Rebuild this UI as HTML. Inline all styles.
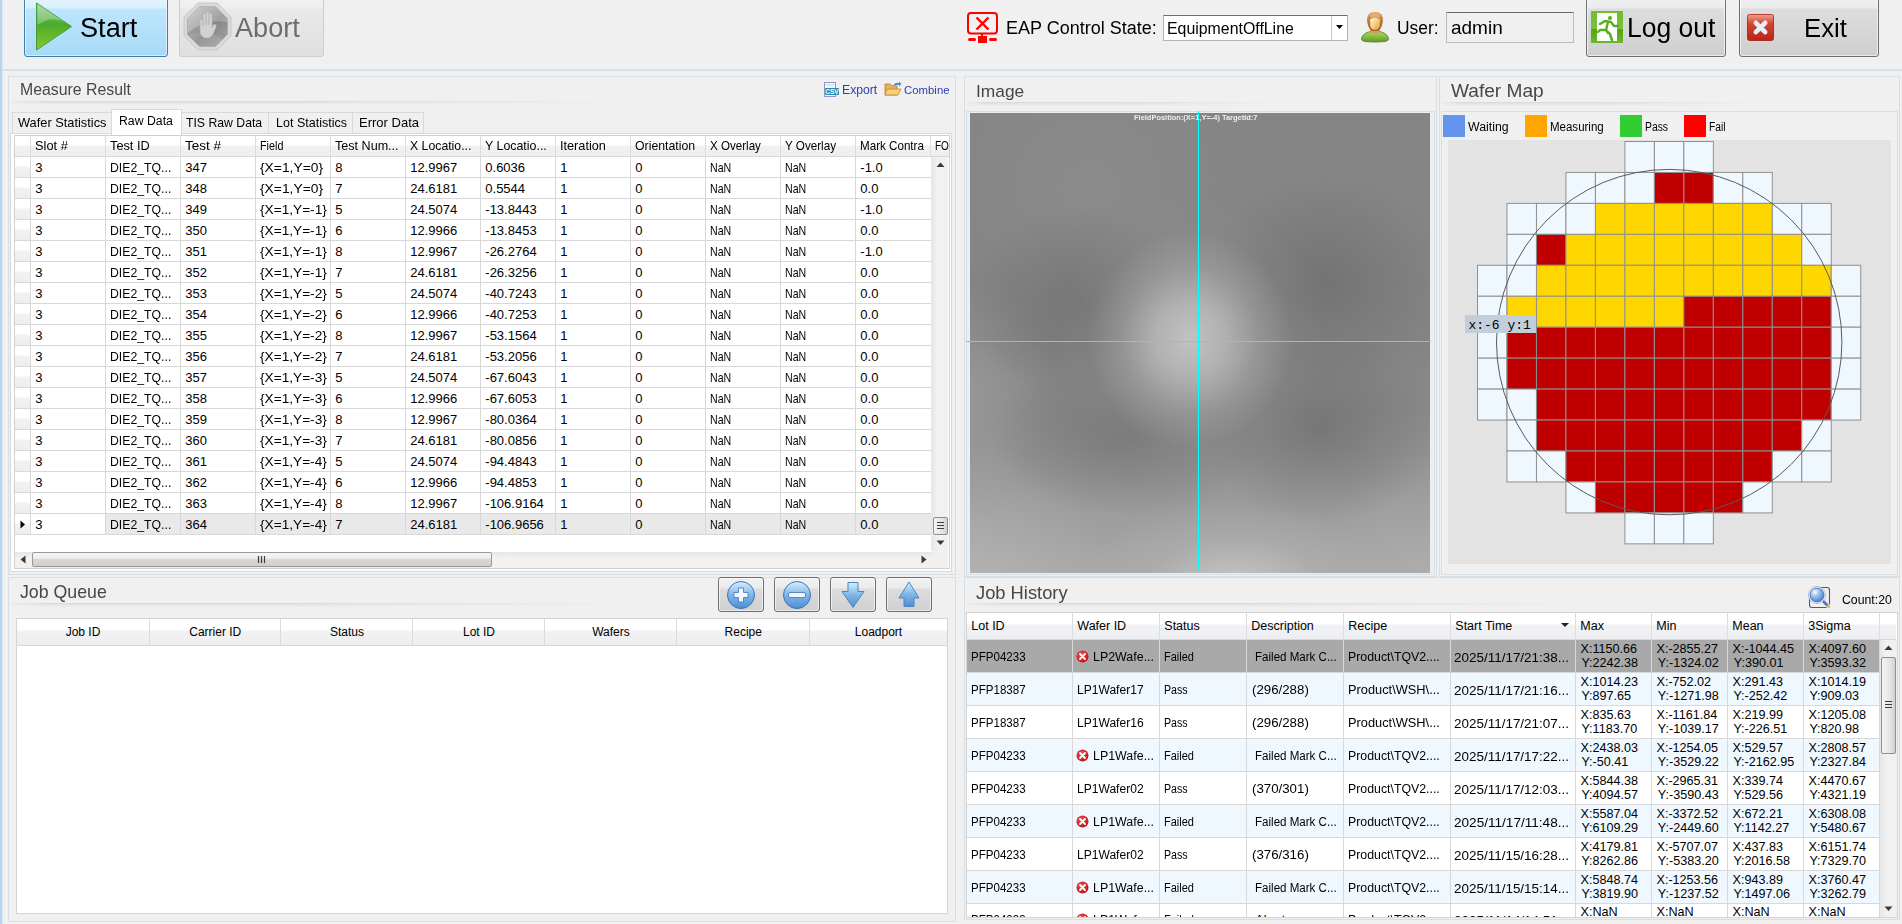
<!DOCTYPE html>
<html><head><meta charset="utf-8"><title>EAP</title>
<style>
html,body{margin:0;padding:0;}
body{width:1902px;height:924px;overflow:hidden;position:relative;background:#f0f0f0;font-family:"Liberation Sans", sans-serif;}
div,svg{box-sizing:content-box;}
</style></head><body>
<div style="position:absolute;left:0px;top:0px;width:2px;height:924px;background:#b9d3ec;"></div>
<div style="position:absolute;left:2px;top:0px;width:1px;height:924px;background:#dce8f3;"></div>
<div style="position:absolute;left:3px;top:69px;width:1899px;height:2px;background:#d6e0e7;"></div>
<div style="position:absolute;left:24px;top:-6px;width:144px;height:63px;box-sizing:border-box;border:1px solid #3c7fb1;border-radius:3px;background:linear-gradient(to bottom,#eaf6fd 0px,#d9f0fc 13px,#bee6fd 14px,#a7d9f5 62px);box-shadow:inset 0 0 0 1px rgba(255,255,255,0.55);"></div>
<svg style="position:absolute;left:34px;top:1px;" width="40" height="52" viewBox="0 0 40 52"><defs><linearGradient id="gpl" x1="0" y1="0" x2="0" y2="1"><stop offset="0" stop-color="#8fd18f"/><stop offset="0.45" stop-color="#4aab2a"/><stop offset="1" stop-color="#8cc82a"/></linearGradient></defs><polygon points="2.5,2 37.5,25.5 2.5,49" fill="url(#gpl)" stroke="#3f9e3f" stroke-width="1"/><path d="M3.5,3 L36.5,25 Q20,12 3.5,24 Z" fill="rgba(255,255,255,0.28)"/></svg>
<div style="position:absolute;top:15.14px;font-size:27px;line-height:27px;color:#000;white-space:nowrap;transform:scaleX(1.0049);transform-origin:0 0;left:80px;">Start</div>
<div style="position:absolute;left:179px;top:-6px;width:145px;height:63px;box-sizing:border-box;border:1px solid #cdcdcd;border-radius:3px;background:linear-gradient(to bottom,#f2f2f2 0px,#eeeeee 13px,#e9e9e9 14px,#dfdfdf 62px);"></div>
<svg style="position:absolute;left:183px;top:2px;" width="50" height="50" viewBox="0 0 50 50"><defs><linearGradient id="gab" x1="0" y1="0" x2="1" y2="1"><stop offset="0" stop-color="#c6c6c6"/><stop offset="0.55" stop-color="#878787"/><stop offset="1" stop-color="#a5a5a5"/></linearGradient></defs><polygon points="15,1 34,1 48,15 48,34 34,48 15,48 1,34 1,15" fill="#d9d9d9" stroke="#c8c8c8" stroke-width="1"/><polygon points="16.5,4.5 32.5,4.5 44.5,16.5 44.5,32.5 32.5,44.5 16.5,44.5 4.5,32.5 4.5,16.5" fill="url(#gab)" stroke="#a8a8a8" stroke-width="0.8"/><path d="M5,31 Q22,16 44.5,20 L44.5,16.5 32.5,4.5 16.5,4.5 4.5,16.5 Z" fill="rgba(255,255,255,0.22)"/><path d="M6,33 Q25,25 40,38 L32.5,44.5 16.5,44.5 Z" fill="rgba(255,255,255,0.12)"/><path d="M17,28 L17,19 Q17,17.5 18.5,17.5 Q20,17.5 20,19 L20,24 L20,13 Q20,11.5 21.5,11.5 Q23,11.5 23,13 L23,23 L23,11.5 Q23,10 24.5,10 Q26,10 26,11.5 L26,23 L26,13 Q26,11.5 27.5,11.5 Q29,11.5 29,13 L29,26 L30,23.5 Q31,21.5 32.5,22.5 Q33.5,23.5 33,25 L30,32 Q28,36 24,36 Q17,36 17,28 Z" fill="#d2d2d2" stroke="#b4b4b4" stroke-width="0.7"/></svg>
<div style="position:absolute;top:15.14px;font-size:27px;line-height:27px;color:#6d6d6d;white-space:nowrap;transform:scaleX(1.0041);transform-origin:0 0;left:235px;">Abort</div>
<svg style="position:absolute;left:966px;top:11px;" width="33" height="33" viewBox="0 0 33 33"><rect x="2" y="2" width="29" height="20.5" rx="3" ry="3" fill="none" stroke="#ff0000" stroke-width="2"/><path d="M10.5,6.5 L22.5,18.5 M22.5,6.5 L10.5,18.5" stroke="#ff0000" stroke-width="2.4"/><rect x="15" y="22" width="2" height="3" fill="#ff0000"/><rect x="12" y="25" width="9" height="7" fill="#ff0000"/><rect x="2" y="27" width="8" height="3" rx="1.5" fill="#ff0000"/><rect x="23" y="27" width="8" height="3" rx="1.5" fill="#ff0000"/></svg>
<div style="position:absolute;top:18.76px;font-size:18px;line-height:18px;color:#000;white-space:nowrap;transform:scaleX(0.9995);transform-origin:0 0;left:1005.5px;">EAP Control State:</div>
<div style="position:absolute;left:1163px;top:15px;width:185px;height:26px;box-sizing:border-box;background:#fff;border:1px solid #b4b4b4;border-top-color:#6e6e6e;"></div>
<div style="position:absolute;left:1331px;top:16px;width:1px;height:24px;background:#c8c8c8;"></div>
<svg style="position:absolute;left:1336px;top:25px;" width="8" height="5" viewBox="0 0 8 5"><polygon points="0,0 7,0 3.5,4" fill="#000"/></svg>
<div style="position:absolute;top:21.46px;font-size:16px;line-height:16px;color:#000;white-space:nowrap;transform:scaleX(0.9923);transform-origin:0 0;left:1166.5px;">EquipmentOffLine</div>
<svg style="position:absolute;left:1360px;top:11px;" width="30" height="32" viewBox="0 0 30 32"><defs><linearGradient id="gsh" x1="0" y1="0" x2="0" y2="1"><stop offset="0" stop-color="#b0dc60"/><stop offset="1" stop-color="#5f9a28"/></linearGradient><linearGradient id="gfc" x1="0" y1="0" x2="1" y2="1"><stop offset="0" stop-color="#fff6d8"/><stop offset="0.6" stop-color="#f4c670"/><stop offset="1" stop-color="#e0a040"/></linearGradient><linearGradient id="ghr" x1="0" y1="0" x2="0" y2="1"><stop offset="0" stop-color="#d89a58"/><stop offset="1" stop-color="#a85a20"/></linearGradient></defs><path d="M1.5,28.5 Q1.5,23.5 8,21.2 Q11,20 13,20.5 Q15,22.5 17,20.5 Q19,20 22,21.2 Q28.5,23.5 28.5,28.5 Q28.5,31 15,31 Q1.5,31 1.5,28.5 Z" fill="url(#gsh)" stroke="#4a7a20" stroke-width="0.8"/><path d="M10.5,17 H19.5 V21.5 Q15,24 10.5,21.5 Z" fill="#d49c68"/><path d="M7,10 Q6.5,1 15,1 Q23.5,1 23,10 Q22.5,15.5 19.5,19.2 Q15,21 10.5,19.2 Q7.5,15.5 7,10 Z" fill="url(#ghr)"/><ellipse cx="15" cy="4.5" rx="5.5" ry="3" fill="#e6b47a" opacity="0.8"/><path d="M10.2,8 Q15,6.2 19.8,8 L19.8,14 Q19.5,18.6 15,18.8 Q10.5,18.6 10.2,14 Z" fill="url(#gfc)"/></svg>
<div style="position:absolute;top:19.69px;font-size:17.5px;line-height:17.5px;color:#000;white-space:nowrap;transform:scaleX(0.9950);transform-origin:0 0;left:1397px;">User:</div>
<div style="position:absolute;left:1446px;top:12px;width:128px;height:31px;box-sizing:border-box;background:#f0f0f0;border:1px solid #bdbdbd;border-top-color:#6a6a6a;"></div>
<div style="position:absolute;top:17.92px;font-size:19px;line-height:19px;color:#000;white-space:nowrap;transform:scaleX(0.9991);transform-origin:0 0;left:1450.5px;">admin</div>
<div style="position:absolute;left:1586px;top:-6px;width:140px;height:63px;box-sizing:border-box;border:1px solid #707070;border-radius:3px;background:linear-gradient(to bottom,#f2f2f2 0px,#ebebeb 13px,#dddddd 14px,#cfcfcf 62px);box-shadow:inset 0 0 0 1px rgba(255,255,255,0.6);"></div>
<svg style="position:absolute;left:1591px;top:11px;" width="32" height="32" viewBox="0 0 32 32"><defs><linearGradient id="gex" x1="0" y1="0" x2="0" y2="1"><stop offset="0" stop-color="#6cc02a"/><stop offset="0.55" stop-color="#7cc040"/><stop offset="0.56" stop-color="#52a60c"/><stop offset="1" stop-color="#6cb82a"/></linearGradient></defs><rect x="0" y="0" width="32" height="32" fill="url(#gex)"/><rect x="6" y="2" width="20" height="28" fill="#fff"/><circle cx="19" cy="7" r="2" fill="#58ad1c"/><path d="M9,13 L14,10 L20,11 L23,15 L27,15 M17,11 L15,19 L9,19 L7,21 M15,19 L19,23 L21,29 M15,19 L17,22" stroke="#58ad1c" stroke-width="2.4" fill="none" stroke-linecap="round" stroke-linejoin="round"/></svg>
<div style="position:absolute;top:15.14px;font-size:27px;line-height:27px;color:#000;white-space:nowrap;transform:scaleX(0.9802);transform-origin:0 0;left:1626.5px;">Log out</div>
<div style="position:absolute;left:1739px;top:-6px;width:140px;height:63px;box-sizing:border-box;border:1px solid #707070;border-radius:3px;background:linear-gradient(to bottom,#f2f2f2 0px,#ebebeb 13px,#dddddd 14px,#cfcfcf 62px);box-shadow:inset 0 0 0 1px rgba(255,255,255,0.6);"></div>
<svg style="position:absolute;left:1747px;top:14px;" width="27" height="27" viewBox="0 0 27 27"><defs><linearGradient id="gxr" x1="0" y1="0" x2="0" y2="1"><stop offset="0" stop-color="#f0a090"/><stop offset="0.35" stop-color="#d8432e"/><stop offset="1" stop-color="#b82418"/></linearGradient></defs><rect x="0.5" y="0.5" width="26" height="26" rx="2" fill="url(#gxr)" stroke="#a81c10" stroke-width="0.8"/><path d="M8.8,8.8 L18.2,18.2 M18.2,8.8 L8.8,18.2" stroke="#e8eef8" stroke-width="4.6" stroke-linecap="round"/></svg>
<div style="position:absolute;top:14.57px;font-size:26.5px;line-height:26.5px;color:#000;white-space:nowrap;transform:scaleX(0.9711);transform-origin:0 0;left:1804.3px;">Exit</div>
<div style="position:absolute;left:8px;top:76px;width:948px;height:499px;box-sizing:border-box;border:1px solid #d5dfe7;background:#f0f0f0;"></div>
<div style="position:absolute;top:82.26px;font-size:16px;line-height:16px;color:#474747;white-space:nowrap;transform:scaleX(0.9907);transform-origin:0 0;left:19.7px;">Measure Result</div>
<div style="position:absolute;left:10px;top:101px;width:620px;height:4px;background:linear-gradient(to bottom,rgba(0,0,0,0.10) 0px,rgba(0,0,0,0.05) 1.5px,rgba(0,0,0,0) 4px);-webkit-mask-image:linear-gradient(to right,rgba(0,0,0,0.2) 0%,#000 6%,#000 45%,rgba(0,0,0,0) 100%);"></div>
<svg style="position:absolute;left:823px;top:82px;" width="17" height="16" viewBox="0 0 17 16"><rect x="1.5" y="0.5" width="11" height="14" fill="#f4f6fb" stroke="#8a9ac8" stroke-width="1"/><rect x="3" y="2" width="8" height="2" fill="#dde3f0"/><rect x="2" y="6" width="14" height="7" rx="1" fill="#2a8ab0"/><text x="9" y="12" font-size="6.5" font-family="Liberation Sans" font-weight="bold" fill="#fff" text-anchor="middle">CSV</text></svg>
<div style="position:absolute;top:84.37px;font-size:12.2px;line-height:12.2px;color:#2b3fae;white-space:nowrap;transform:scaleX(1.0011);transform-origin:0 0;left:841.5px;">Export</div>
<svg style="position:absolute;left:884px;top:81px;" width="18" height="15" viewBox="0 0 18 15"><path d="M1,3 L6,3 L8,5 L13,5 L13,14 L1,14 Z" fill="#e8b25a" stroke="#b87a2a" stroke-width="0.8"/><path d="M3,8 L17,8 L14,14 L1,14 Z" fill="#f6cf7a" stroke="#c08838" stroke-width="0.8"/><path d="M9,5 Q11,1 15,2 L15,0.5 L17.5,3 L15,5.5 L15,4 Q12,3.5 9,5 Z" fill="#4a8ad8"/></svg>
<div style="position:absolute;top:85.05px;font-size:11.4px;line-height:11.4px;color:#2b3fae;white-space:nowrap;transform:scaleX(0.9995);transform-origin:0 0;left:903.7px;">Combine</div>
<div style="position:absolute;left:10px;top:133px;width:942px;height:439px;box-sizing:border-box;border:1px solid #d9d9d9;background:#fff;"></div>
<div style="position:absolute;left:12px;top:112px;width:100px;height:22px;box-sizing:border-box;border:1px solid #d9d9d9;background:#f0f0f0;"></div>
<div style="position:absolute;top:117.33px;font-size:12.6px;line-height:12.6px;color:#000;white-space:nowrap;transform:scaleX(1.0167);transform-origin:0 0;left:18.1px;">Wafer Statistics</div>
<div style="position:absolute;left:181px;top:112px;width:88px;height:22px;box-sizing:border-box;border:1px solid #d9d9d9;background:#f0f0f0;"></div>
<div style="position:absolute;top:117.33px;font-size:12.6px;line-height:12.6px;color:#000;white-space:nowrap;transform:scaleX(0.9716);transform-origin:0 0;left:186px;">TIS Raw Data</div>
<div style="position:absolute;left:268px;top:112px;width:85px;height:22px;box-sizing:border-box;border:1px solid #d9d9d9;background:#f0f0f0;"></div>
<div style="position:absolute;top:117.33px;font-size:12.6px;line-height:12.6px;color:#000;white-space:nowrap;transform:scaleX(0.9940);transform-origin:0 0;left:275.6px;">Lot Statistics</div>
<div style="position:absolute;left:352px;top:112px;width:72px;height:22px;box-sizing:border-box;border:1px solid #d9d9d9;background:#f0f0f0;"></div>
<div style="position:absolute;top:117.33px;font-size:12.6px;line-height:12.6px;color:#000;white-space:nowrap;transform:scaleX(1.0342);transform-origin:0 0;left:359.3px;">Error Data</div>
<div style="position:absolute;left:111px;top:109px;width:71px;height:26px;box-sizing:border-box;border:1px solid #d9d9d9;border-bottom:none;background:#fff;"></div>
<div style="position:absolute;left:112px;top:133px;width:69px;height:2px;background:#fff;"></div>
<div style="position:absolute;top:114.59px;font-size:12.3px;line-height:12.3px;color:#000;white-space:nowrap;transform:scaleX(0.9981);transform-origin:0 0;left:119.4px;">Raw Data</div>
<div style="position:absolute;left:14px;top:135px;width:936px;height:434px;box-sizing:border-box;border:1px solid #d0d0d0;background:#fff;"></div>
<div style="position:absolute;left:0;top:0;width:1902px;height:924px;clip-path:inset(136px 953px 372px 15px);">
<div style="position:absolute;left:15px;top:136px;width:934px;height:20px;background:linear-gradient(to bottom,#ffffff 0px,#ffffff 9px,#f1f2f4 10px,#eceef1 20px);"></div>
<div style="position:absolute;left:15px;top:156px;width:934px;height:1px;background:#d8d8d8;"></div>
<div style="position:absolute;left:30px;top:136px;width:1px;height:20px;background:#dcdcdc;"></div>
<div style="position:absolute;left:105px;top:136px;width:1px;height:20px;background:#dcdcdc;"></div>
<div style="position:absolute;left:180px;top:136px;width:1px;height:20px;background:#dcdcdc;"></div>
<div style="position:absolute;left:255px;top:136px;width:1px;height:20px;background:#dcdcdc;"></div>
<div style="position:absolute;left:330px;top:136px;width:1px;height:20px;background:#dcdcdc;"></div>
<div style="position:absolute;left:405px;top:136px;width:1px;height:20px;background:#dcdcdc;"></div>
<div style="position:absolute;left:480px;top:136px;width:1px;height:20px;background:#dcdcdc;"></div>
<div style="position:absolute;left:555px;top:136px;width:1px;height:20px;background:#dcdcdc;"></div>
<div style="position:absolute;left:630px;top:136px;width:1px;height:20px;background:#dcdcdc;"></div>
<div style="position:absolute;left:705px;top:136px;width:1px;height:20px;background:#dcdcdc;"></div>
<div style="position:absolute;left:780px;top:136px;width:1px;height:20px;background:#dcdcdc;"></div>
<div style="position:absolute;left:855px;top:136px;width:1px;height:20px;background:#dcdcdc;"></div>
<div style="position:absolute;left:930px;top:136px;width:1px;height:20px;background:#dcdcdc;"></div>
<div style="position:absolute;top:138.60px;font-size:13px;line-height:13px;color:#000;white-space:nowrap;transform:scaleX(0.9867);transform-origin:0 0;left:35.3px;">Slot #</div>
<div style="position:absolute;top:138.60px;font-size:13px;line-height:13px;color:#000;white-space:nowrap;transform:scaleX(0.9814);transform-origin:0 0;left:110.3px;">Test ID</div>
<div style="position:absolute;top:138.60px;font-size:13px;line-height:13px;color:#000;white-space:nowrap;transform:scaleX(1.0380);transform-origin:0 0;left:185.3px;">Test #</div>
<div style="position:absolute;top:138.60px;font-size:13px;line-height:13px;color:#000;white-space:nowrap;transform:scaleX(0.8305);transform-origin:0 0;left:260.3px;">Field</div>
<div style="position:absolute;top:138.60px;font-size:13px;line-height:13px;color:#000;white-space:nowrap;transform:scaleX(0.9675);transform-origin:0 0;left:335.3px;">Test Num...</div>
<div style="position:absolute;top:138.60px;font-size:13px;line-height:13px;color:#000;white-space:nowrap;transform:scaleX(0.9441);transform-origin:0 0;left:410.3px;">X Locatio...</div>
<div style="position:absolute;top:138.60px;font-size:13px;line-height:13px;color:#000;white-space:nowrap;transform:scaleX(0.9533);transform-origin:0 0;left:485.3px;">Y Locatio...</div>
<div style="position:absolute;top:138.60px;font-size:13px;line-height:13px;color:#000;white-space:nowrap;transform:scaleX(0.9772);transform-origin:0 0;left:560.3px;">Iteration</div>
<div style="position:absolute;top:138.60px;font-size:13px;line-height:13px;color:#000;white-space:nowrap;transform:scaleX(0.9451);transform-origin:0 0;left:635.3px;">Orientation</div>
<div style="position:absolute;top:138.60px;font-size:13px;line-height:13px;color:#000;white-space:nowrap;transform:scaleX(0.8919);transform-origin:0 0;left:710.3px;">X Overlay</div>
<div style="position:absolute;top:138.60px;font-size:13px;line-height:13px;color:#000;white-space:nowrap;transform:scaleX(0.8971);transform-origin:0 0;left:785.3px;">Y Overlay</div>
<div style="position:absolute;top:138.60px;font-size:13px;line-height:13px;color:#000;white-space:nowrap;transform:scaleX(0.8935);transform-origin:0 0;left:860.3px;">Mark Contra</div>
<div style="position:absolute;top:138.60px;font-size:13px;line-height:13px;color:#000;white-space:nowrap;transform:scaleX(0.7700);transform-origin:0 0;left:935.3px;">FO</div>
<div style="position:absolute;left:15px;top:157px;width:15px;height:20px;background:linear-gradient(to bottom,#ffffff 0px,#ffffff 9px,#f1f2f4 10px,#eceef1 20px);"></div>
<div style="position:absolute;left:15px;top:177px;width:918px;height:1px;background:#d8d8d8;"></div>
<div style="position:absolute;left:30px;top:157px;width:1px;height:20px;background:#d8d8d8;"></div>
<div style="position:absolute;left:105px;top:157px;width:1px;height:20px;background:#d8d8d8;"></div>
<div style="position:absolute;left:180px;top:157px;width:1px;height:20px;background:#d8d8d8;"></div>
<div style="position:absolute;left:255px;top:157px;width:1px;height:20px;background:#d8d8d8;"></div>
<div style="position:absolute;left:330px;top:157px;width:1px;height:20px;background:#d8d8d8;"></div>
<div style="position:absolute;left:405px;top:157px;width:1px;height:20px;background:#d8d8d8;"></div>
<div style="position:absolute;left:480px;top:157px;width:1px;height:20px;background:#d8d8d8;"></div>
<div style="position:absolute;left:555px;top:157px;width:1px;height:20px;background:#d8d8d8;"></div>
<div style="position:absolute;left:630px;top:157px;width:1px;height:20px;background:#d8d8d8;"></div>
<div style="position:absolute;left:705px;top:157px;width:1px;height:20px;background:#d8d8d8;"></div>
<div style="position:absolute;left:780px;top:157px;width:1px;height:20px;background:#d8d8d8;"></div>
<div style="position:absolute;left:855px;top:157px;width:1px;height:20px;background:#d8d8d8;"></div>
<div style="position:absolute;top:161.00px;font-size:13px;line-height:13px;color:#000;white-space:nowrap;left:35.3px;">3</div>
<div style="position:absolute;top:161.00px;font-size:13px;line-height:13px;color:#000;white-space:nowrap;transform:scaleX(0.9428);transform-origin:0 0;left:110.3px;">DIE2_TQ...</div>
<div style="position:absolute;top:161.00px;font-size:13px;line-height:13px;color:#000;white-space:nowrap;left:185.3px;">347</div>
<div style="position:absolute;top:161.00px;font-size:13px;line-height:13px;color:#000;white-space:nowrap;transform:scaleX(1.0627);transform-origin:0 0;left:260.3px;">{X=1,Y=0}</div>
<div style="position:absolute;top:161.00px;font-size:13px;line-height:13px;color:#000;white-space:nowrap;left:335.3px;">8</div>
<div style="position:absolute;top:161.00px;font-size:13px;line-height:13px;color:#000;white-space:nowrap;left:410.3px;">12.9967</div>
<div style="position:absolute;top:161.00px;font-size:13px;line-height:13px;color:#000;white-space:nowrap;left:485.3px;">0.6036</div>
<div style="position:absolute;top:161.00px;font-size:13px;line-height:13px;color:#000;white-space:nowrap;left:560.3px;">1</div>
<div style="position:absolute;top:161.00px;font-size:13px;line-height:13px;color:#000;white-space:nowrap;left:635.3px;">0</div>
<div style="position:absolute;top:161.00px;font-size:13px;line-height:13px;color:#000;white-space:nowrap;transform:scaleX(0.8152);transform-origin:0 0;left:710.3px;">NaN</div>
<div style="position:absolute;top:161.00px;font-size:13px;line-height:13px;color:#000;white-space:nowrap;transform:scaleX(0.8152);transform-origin:0 0;left:785.3px;">NaN</div>
<div style="position:absolute;top:161.00px;font-size:13px;line-height:13px;color:#000;white-space:nowrap;left:860.3px;">-1.0</div>
<div style="position:absolute;left:15px;top:178px;width:15px;height:20px;background:linear-gradient(to bottom,#ffffff 0px,#ffffff 9px,#f1f2f4 10px,#eceef1 20px);"></div>
<div style="position:absolute;left:15px;top:198px;width:918px;height:1px;background:#d8d8d8;"></div>
<div style="position:absolute;left:30px;top:178px;width:1px;height:20px;background:#d8d8d8;"></div>
<div style="position:absolute;left:105px;top:178px;width:1px;height:20px;background:#d8d8d8;"></div>
<div style="position:absolute;left:180px;top:178px;width:1px;height:20px;background:#d8d8d8;"></div>
<div style="position:absolute;left:255px;top:178px;width:1px;height:20px;background:#d8d8d8;"></div>
<div style="position:absolute;left:330px;top:178px;width:1px;height:20px;background:#d8d8d8;"></div>
<div style="position:absolute;left:405px;top:178px;width:1px;height:20px;background:#d8d8d8;"></div>
<div style="position:absolute;left:480px;top:178px;width:1px;height:20px;background:#d8d8d8;"></div>
<div style="position:absolute;left:555px;top:178px;width:1px;height:20px;background:#d8d8d8;"></div>
<div style="position:absolute;left:630px;top:178px;width:1px;height:20px;background:#d8d8d8;"></div>
<div style="position:absolute;left:705px;top:178px;width:1px;height:20px;background:#d8d8d8;"></div>
<div style="position:absolute;left:780px;top:178px;width:1px;height:20px;background:#d8d8d8;"></div>
<div style="position:absolute;left:855px;top:178px;width:1px;height:20px;background:#d8d8d8;"></div>
<div style="position:absolute;top:182.00px;font-size:13px;line-height:13px;color:#000;white-space:nowrap;left:35.3px;">3</div>
<div style="position:absolute;top:182.00px;font-size:13px;line-height:13px;color:#000;white-space:nowrap;transform:scaleX(0.9428);transform-origin:0 0;left:110.3px;">DIE2_TQ...</div>
<div style="position:absolute;top:182.00px;font-size:13px;line-height:13px;color:#000;white-space:nowrap;left:185.3px;">348</div>
<div style="position:absolute;top:182.00px;font-size:13px;line-height:13px;color:#000;white-space:nowrap;transform:scaleX(1.0627);transform-origin:0 0;left:260.3px;">{X=1,Y=0}</div>
<div style="position:absolute;top:182.00px;font-size:13px;line-height:13px;color:#000;white-space:nowrap;left:335.3px;">7</div>
<div style="position:absolute;top:182.00px;font-size:13px;line-height:13px;color:#000;white-space:nowrap;left:410.3px;">24.6181</div>
<div style="position:absolute;top:182.00px;font-size:13px;line-height:13px;color:#000;white-space:nowrap;left:485.3px;">0.5544</div>
<div style="position:absolute;top:182.00px;font-size:13px;line-height:13px;color:#000;white-space:nowrap;left:560.3px;">1</div>
<div style="position:absolute;top:182.00px;font-size:13px;line-height:13px;color:#000;white-space:nowrap;left:635.3px;">0</div>
<div style="position:absolute;top:182.00px;font-size:13px;line-height:13px;color:#000;white-space:nowrap;transform:scaleX(0.8152);transform-origin:0 0;left:710.3px;">NaN</div>
<div style="position:absolute;top:182.00px;font-size:13px;line-height:13px;color:#000;white-space:nowrap;transform:scaleX(0.8152);transform-origin:0 0;left:785.3px;">NaN</div>
<div style="position:absolute;top:182.00px;font-size:13px;line-height:13px;color:#000;white-space:nowrap;left:860.3px;">0.0</div>
<div style="position:absolute;left:15px;top:199px;width:15px;height:20px;background:linear-gradient(to bottom,#ffffff 0px,#ffffff 9px,#f1f2f4 10px,#eceef1 20px);"></div>
<div style="position:absolute;left:15px;top:219px;width:918px;height:1px;background:#d8d8d8;"></div>
<div style="position:absolute;left:30px;top:199px;width:1px;height:20px;background:#d8d8d8;"></div>
<div style="position:absolute;left:105px;top:199px;width:1px;height:20px;background:#d8d8d8;"></div>
<div style="position:absolute;left:180px;top:199px;width:1px;height:20px;background:#d8d8d8;"></div>
<div style="position:absolute;left:255px;top:199px;width:1px;height:20px;background:#d8d8d8;"></div>
<div style="position:absolute;left:330px;top:199px;width:1px;height:20px;background:#d8d8d8;"></div>
<div style="position:absolute;left:405px;top:199px;width:1px;height:20px;background:#d8d8d8;"></div>
<div style="position:absolute;left:480px;top:199px;width:1px;height:20px;background:#d8d8d8;"></div>
<div style="position:absolute;left:555px;top:199px;width:1px;height:20px;background:#d8d8d8;"></div>
<div style="position:absolute;left:630px;top:199px;width:1px;height:20px;background:#d8d8d8;"></div>
<div style="position:absolute;left:705px;top:199px;width:1px;height:20px;background:#d8d8d8;"></div>
<div style="position:absolute;left:780px;top:199px;width:1px;height:20px;background:#d8d8d8;"></div>
<div style="position:absolute;left:855px;top:199px;width:1px;height:20px;background:#d8d8d8;"></div>
<div style="position:absolute;top:203.00px;font-size:13px;line-height:13px;color:#000;white-space:nowrap;left:35.3px;">3</div>
<div style="position:absolute;top:203.00px;font-size:13px;line-height:13px;color:#000;white-space:nowrap;transform:scaleX(0.9428);transform-origin:0 0;left:110.3px;">DIE2_TQ...</div>
<div style="position:absolute;top:203.00px;font-size:13px;line-height:13px;color:#000;white-space:nowrap;left:185.3px;">349</div>
<div style="position:absolute;top:203.00px;font-size:13px;line-height:13px;color:#000;white-space:nowrap;transform:scaleX(1.0502);transform-origin:0 0;left:260.3px;">{X=1,Y=-1}</div>
<div style="position:absolute;top:203.00px;font-size:13px;line-height:13px;color:#000;white-space:nowrap;left:335.3px;">5</div>
<div style="position:absolute;top:203.00px;font-size:13px;line-height:13px;color:#000;white-space:nowrap;left:410.3px;">24.5074</div>
<div style="position:absolute;top:203.00px;font-size:13px;line-height:13px;color:#000;white-space:nowrap;left:485.3px;">-13.8443</div>
<div style="position:absolute;top:203.00px;font-size:13px;line-height:13px;color:#000;white-space:nowrap;left:560.3px;">1</div>
<div style="position:absolute;top:203.00px;font-size:13px;line-height:13px;color:#000;white-space:nowrap;left:635.3px;">0</div>
<div style="position:absolute;top:203.00px;font-size:13px;line-height:13px;color:#000;white-space:nowrap;transform:scaleX(0.8152);transform-origin:0 0;left:710.3px;">NaN</div>
<div style="position:absolute;top:203.00px;font-size:13px;line-height:13px;color:#000;white-space:nowrap;transform:scaleX(0.8152);transform-origin:0 0;left:785.3px;">NaN</div>
<div style="position:absolute;top:203.00px;font-size:13px;line-height:13px;color:#000;white-space:nowrap;left:860.3px;">-1.0</div>
<div style="position:absolute;left:15px;top:220px;width:15px;height:20px;background:linear-gradient(to bottom,#ffffff 0px,#ffffff 9px,#f1f2f4 10px,#eceef1 20px);"></div>
<div style="position:absolute;left:15px;top:240px;width:918px;height:1px;background:#d8d8d8;"></div>
<div style="position:absolute;left:30px;top:220px;width:1px;height:20px;background:#d8d8d8;"></div>
<div style="position:absolute;left:105px;top:220px;width:1px;height:20px;background:#d8d8d8;"></div>
<div style="position:absolute;left:180px;top:220px;width:1px;height:20px;background:#d8d8d8;"></div>
<div style="position:absolute;left:255px;top:220px;width:1px;height:20px;background:#d8d8d8;"></div>
<div style="position:absolute;left:330px;top:220px;width:1px;height:20px;background:#d8d8d8;"></div>
<div style="position:absolute;left:405px;top:220px;width:1px;height:20px;background:#d8d8d8;"></div>
<div style="position:absolute;left:480px;top:220px;width:1px;height:20px;background:#d8d8d8;"></div>
<div style="position:absolute;left:555px;top:220px;width:1px;height:20px;background:#d8d8d8;"></div>
<div style="position:absolute;left:630px;top:220px;width:1px;height:20px;background:#d8d8d8;"></div>
<div style="position:absolute;left:705px;top:220px;width:1px;height:20px;background:#d8d8d8;"></div>
<div style="position:absolute;left:780px;top:220px;width:1px;height:20px;background:#d8d8d8;"></div>
<div style="position:absolute;left:855px;top:220px;width:1px;height:20px;background:#d8d8d8;"></div>
<div style="position:absolute;top:224.00px;font-size:13px;line-height:13px;color:#000;white-space:nowrap;left:35.3px;">3</div>
<div style="position:absolute;top:224.00px;font-size:13px;line-height:13px;color:#000;white-space:nowrap;transform:scaleX(0.9428);transform-origin:0 0;left:110.3px;">DIE2_TQ...</div>
<div style="position:absolute;top:224.00px;font-size:13px;line-height:13px;color:#000;white-space:nowrap;left:185.3px;">350</div>
<div style="position:absolute;top:224.00px;font-size:13px;line-height:13px;color:#000;white-space:nowrap;transform:scaleX(1.0502);transform-origin:0 0;left:260.3px;">{X=1,Y=-1}</div>
<div style="position:absolute;top:224.00px;font-size:13px;line-height:13px;color:#000;white-space:nowrap;left:335.3px;">6</div>
<div style="position:absolute;top:224.00px;font-size:13px;line-height:13px;color:#000;white-space:nowrap;left:410.3px;">12.9966</div>
<div style="position:absolute;top:224.00px;font-size:13px;line-height:13px;color:#000;white-space:nowrap;left:485.3px;">-13.8453</div>
<div style="position:absolute;top:224.00px;font-size:13px;line-height:13px;color:#000;white-space:nowrap;left:560.3px;">1</div>
<div style="position:absolute;top:224.00px;font-size:13px;line-height:13px;color:#000;white-space:nowrap;left:635.3px;">0</div>
<div style="position:absolute;top:224.00px;font-size:13px;line-height:13px;color:#000;white-space:nowrap;transform:scaleX(0.8152);transform-origin:0 0;left:710.3px;">NaN</div>
<div style="position:absolute;top:224.00px;font-size:13px;line-height:13px;color:#000;white-space:nowrap;transform:scaleX(0.8152);transform-origin:0 0;left:785.3px;">NaN</div>
<div style="position:absolute;top:224.00px;font-size:13px;line-height:13px;color:#000;white-space:nowrap;left:860.3px;">0.0</div>
<div style="position:absolute;left:15px;top:241px;width:15px;height:20px;background:linear-gradient(to bottom,#ffffff 0px,#ffffff 9px,#f1f2f4 10px,#eceef1 20px);"></div>
<div style="position:absolute;left:15px;top:261px;width:918px;height:1px;background:#d8d8d8;"></div>
<div style="position:absolute;left:30px;top:241px;width:1px;height:20px;background:#d8d8d8;"></div>
<div style="position:absolute;left:105px;top:241px;width:1px;height:20px;background:#d8d8d8;"></div>
<div style="position:absolute;left:180px;top:241px;width:1px;height:20px;background:#d8d8d8;"></div>
<div style="position:absolute;left:255px;top:241px;width:1px;height:20px;background:#d8d8d8;"></div>
<div style="position:absolute;left:330px;top:241px;width:1px;height:20px;background:#d8d8d8;"></div>
<div style="position:absolute;left:405px;top:241px;width:1px;height:20px;background:#d8d8d8;"></div>
<div style="position:absolute;left:480px;top:241px;width:1px;height:20px;background:#d8d8d8;"></div>
<div style="position:absolute;left:555px;top:241px;width:1px;height:20px;background:#d8d8d8;"></div>
<div style="position:absolute;left:630px;top:241px;width:1px;height:20px;background:#d8d8d8;"></div>
<div style="position:absolute;left:705px;top:241px;width:1px;height:20px;background:#d8d8d8;"></div>
<div style="position:absolute;left:780px;top:241px;width:1px;height:20px;background:#d8d8d8;"></div>
<div style="position:absolute;left:855px;top:241px;width:1px;height:20px;background:#d8d8d8;"></div>
<div style="position:absolute;top:245.00px;font-size:13px;line-height:13px;color:#000;white-space:nowrap;left:35.3px;">3</div>
<div style="position:absolute;top:245.00px;font-size:13px;line-height:13px;color:#000;white-space:nowrap;transform:scaleX(0.9428);transform-origin:0 0;left:110.3px;">DIE2_TQ...</div>
<div style="position:absolute;top:245.00px;font-size:13px;line-height:13px;color:#000;white-space:nowrap;left:185.3px;">351</div>
<div style="position:absolute;top:245.00px;font-size:13px;line-height:13px;color:#000;white-space:nowrap;transform:scaleX(1.0502);transform-origin:0 0;left:260.3px;">{X=1,Y=-1}</div>
<div style="position:absolute;top:245.00px;font-size:13px;line-height:13px;color:#000;white-space:nowrap;left:335.3px;">8</div>
<div style="position:absolute;top:245.00px;font-size:13px;line-height:13px;color:#000;white-space:nowrap;left:410.3px;">12.9967</div>
<div style="position:absolute;top:245.00px;font-size:13px;line-height:13px;color:#000;white-space:nowrap;left:485.3px;">-26.2764</div>
<div style="position:absolute;top:245.00px;font-size:13px;line-height:13px;color:#000;white-space:nowrap;left:560.3px;">1</div>
<div style="position:absolute;top:245.00px;font-size:13px;line-height:13px;color:#000;white-space:nowrap;left:635.3px;">0</div>
<div style="position:absolute;top:245.00px;font-size:13px;line-height:13px;color:#000;white-space:nowrap;transform:scaleX(0.8152);transform-origin:0 0;left:710.3px;">NaN</div>
<div style="position:absolute;top:245.00px;font-size:13px;line-height:13px;color:#000;white-space:nowrap;transform:scaleX(0.8152);transform-origin:0 0;left:785.3px;">NaN</div>
<div style="position:absolute;top:245.00px;font-size:13px;line-height:13px;color:#000;white-space:nowrap;left:860.3px;">-1.0</div>
<div style="position:absolute;left:15px;top:262px;width:15px;height:20px;background:linear-gradient(to bottom,#ffffff 0px,#ffffff 9px,#f1f2f4 10px,#eceef1 20px);"></div>
<div style="position:absolute;left:15px;top:282px;width:918px;height:1px;background:#d8d8d8;"></div>
<div style="position:absolute;left:30px;top:262px;width:1px;height:20px;background:#d8d8d8;"></div>
<div style="position:absolute;left:105px;top:262px;width:1px;height:20px;background:#d8d8d8;"></div>
<div style="position:absolute;left:180px;top:262px;width:1px;height:20px;background:#d8d8d8;"></div>
<div style="position:absolute;left:255px;top:262px;width:1px;height:20px;background:#d8d8d8;"></div>
<div style="position:absolute;left:330px;top:262px;width:1px;height:20px;background:#d8d8d8;"></div>
<div style="position:absolute;left:405px;top:262px;width:1px;height:20px;background:#d8d8d8;"></div>
<div style="position:absolute;left:480px;top:262px;width:1px;height:20px;background:#d8d8d8;"></div>
<div style="position:absolute;left:555px;top:262px;width:1px;height:20px;background:#d8d8d8;"></div>
<div style="position:absolute;left:630px;top:262px;width:1px;height:20px;background:#d8d8d8;"></div>
<div style="position:absolute;left:705px;top:262px;width:1px;height:20px;background:#d8d8d8;"></div>
<div style="position:absolute;left:780px;top:262px;width:1px;height:20px;background:#d8d8d8;"></div>
<div style="position:absolute;left:855px;top:262px;width:1px;height:20px;background:#d8d8d8;"></div>
<div style="position:absolute;top:266.00px;font-size:13px;line-height:13px;color:#000;white-space:nowrap;left:35.3px;">3</div>
<div style="position:absolute;top:266.00px;font-size:13px;line-height:13px;color:#000;white-space:nowrap;transform:scaleX(0.9428);transform-origin:0 0;left:110.3px;">DIE2_TQ...</div>
<div style="position:absolute;top:266.00px;font-size:13px;line-height:13px;color:#000;white-space:nowrap;left:185.3px;">352</div>
<div style="position:absolute;top:266.00px;font-size:13px;line-height:13px;color:#000;white-space:nowrap;transform:scaleX(1.0502);transform-origin:0 0;left:260.3px;">{X=1,Y=-1}</div>
<div style="position:absolute;top:266.00px;font-size:13px;line-height:13px;color:#000;white-space:nowrap;left:335.3px;">7</div>
<div style="position:absolute;top:266.00px;font-size:13px;line-height:13px;color:#000;white-space:nowrap;left:410.3px;">24.6181</div>
<div style="position:absolute;top:266.00px;font-size:13px;line-height:13px;color:#000;white-space:nowrap;left:485.3px;">-26.3256</div>
<div style="position:absolute;top:266.00px;font-size:13px;line-height:13px;color:#000;white-space:nowrap;left:560.3px;">1</div>
<div style="position:absolute;top:266.00px;font-size:13px;line-height:13px;color:#000;white-space:nowrap;left:635.3px;">0</div>
<div style="position:absolute;top:266.00px;font-size:13px;line-height:13px;color:#000;white-space:nowrap;transform:scaleX(0.8152);transform-origin:0 0;left:710.3px;">NaN</div>
<div style="position:absolute;top:266.00px;font-size:13px;line-height:13px;color:#000;white-space:nowrap;transform:scaleX(0.8152);transform-origin:0 0;left:785.3px;">NaN</div>
<div style="position:absolute;top:266.00px;font-size:13px;line-height:13px;color:#000;white-space:nowrap;left:860.3px;">0.0</div>
<div style="position:absolute;left:15px;top:283px;width:15px;height:20px;background:linear-gradient(to bottom,#ffffff 0px,#ffffff 9px,#f1f2f4 10px,#eceef1 20px);"></div>
<div style="position:absolute;left:15px;top:303px;width:918px;height:1px;background:#d8d8d8;"></div>
<div style="position:absolute;left:30px;top:283px;width:1px;height:20px;background:#d8d8d8;"></div>
<div style="position:absolute;left:105px;top:283px;width:1px;height:20px;background:#d8d8d8;"></div>
<div style="position:absolute;left:180px;top:283px;width:1px;height:20px;background:#d8d8d8;"></div>
<div style="position:absolute;left:255px;top:283px;width:1px;height:20px;background:#d8d8d8;"></div>
<div style="position:absolute;left:330px;top:283px;width:1px;height:20px;background:#d8d8d8;"></div>
<div style="position:absolute;left:405px;top:283px;width:1px;height:20px;background:#d8d8d8;"></div>
<div style="position:absolute;left:480px;top:283px;width:1px;height:20px;background:#d8d8d8;"></div>
<div style="position:absolute;left:555px;top:283px;width:1px;height:20px;background:#d8d8d8;"></div>
<div style="position:absolute;left:630px;top:283px;width:1px;height:20px;background:#d8d8d8;"></div>
<div style="position:absolute;left:705px;top:283px;width:1px;height:20px;background:#d8d8d8;"></div>
<div style="position:absolute;left:780px;top:283px;width:1px;height:20px;background:#d8d8d8;"></div>
<div style="position:absolute;left:855px;top:283px;width:1px;height:20px;background:#d8d8d8;"></div>
<div style="position:absolute;top:287.00px;font-size:13px;line-height:13px;color:#000;white-space:nowrap;left:35.3px;">3</div>
<div style="position:absolute;top:287.00px;font-size:13px;line-height:13px;color:#000;white-space:nowrap;transform:scaleX(0.9428);transform-origin:0 0;left:110.3px;">DIE2_TQ...</div>
<div style="position:absolute;top:287.00px;font-size:13px;line-height:13px;color:#000;white-space:nowrap;left:185.3px;">353</div>
<div style="position:absolute;top:287.00px;font-size:13px;line-height:13px;color:#000;white-space:nowrap;transform:scaleX(1.0502);transform-origin:0 0;left:260.3px;">{X=1,Y=-2}</div>
<div style="position:absolute;top:287.00px;font-size:13px;line-height:13px;color:#000;white-space:nowrap;left:335.3px;">5</div>
<div style="position:absolute;top:287.00px;font-size:13px;line-height:13px;color:#000;white-space:nowrap;left:410.3px;">24.5074</div>
<div style="position:absolute;top:287.00px;font-size:13px;line-height:13px;color:#000;white-space:nowrap;left:485.3px;">-40.7243</div>
<div style="position:absolute;top:287.00px;font-size:13px;line-height:13px;color:#000;white-space:nowrap;left:560.3px;">1</div>
<div style="position:absolute;top:287.00px;font-size:13px;line-height:13px;color:#000;white-space:nowrap;left:635.3px;">0</div>
<div style="position:absolute;top:287.00px;font-size:13px;line-height:13px;color:#000;white-space:nowrap;transform:scaleX(0.8152);transform-origin:0 0;left:710.3px;">NaN</div>
<div style="position:absolute;top:287.00px;font-size:13px;line-height:13px;color:#000;white-space:nowrap;transform:scaleX(0.8152);transform-origin:0 0;left:785.3px;">NaN</div>
<div style="position:absolute;top:287.00px;font-size:13px;line-height:13px;color:#000;white-space:nowrap;left:860.3px;">0.0</div>
<div style="position:absolute;left:15px;top:304px;width:15px;height:20px;background:linear-gradient(to bottom,#ffffff 0px,#ffffff 9px,#f1f2f4 10px,#eceef1 20px);"></div>
<div style="position:absolute;left:15px;top:324px;width:918px;height:1px;background:#d8d8d8;"></div>
<div style="position:absolute;left:30px;top:304px;width:1px;height:20px;background:#d8d8d8;"></div>
<div style="position:absolute;left:105px;top:304px;width:1px;height:20px;background:#d8d8d8;"></div>
<div style="position:absolute;left:180px;top:304px;width:1px;height:20px;background:#d8d8d8;"></div>
<div style="position:absolute;left:255px;top:304px;width:1px;height:20px;background:#d8d8d8;"></div>
<div style="position:absolute;left:330px;top:304px;width:1px;height:20px;background:#d8d8d8;"></div>
<div style="position:absolute;left:405px;top:304px;width:1px;height:20px;background:#d8d8d8;"></div>
<div style="position:absolute;left:480px;top:304px;width:1px;height:20px;background:#d8d8d8;"></div>
<div style="position:absolute;left:555px;top:304px;width:1px;height:20px;background:#d8d8d8;"></div>
<div style="position:absolute;left:630px;top:304px;width:1px;height:20px;background:#d8d8d8;"></div>
<div style="position:absolute;left:705px;top:304px;width:1px;height:20px;background:#d8d8d8;"></div>
<div style="position:absolute;left:780px;top:304px;width:1px;height:20px;background:#d8d8d8;"></div>
<div style="position:absolute;left:855px;top:304px;width:1px;height:20px;background:#d8d8d8;"></div>
<div style="position:absolute;top:308.00px;font-size:13px;line-height:13px;color:#000;white-space:nowrap;left:35.3px;">3</div>
<div style="position:absolute;top:308.00px;font-size:13px;line-height:13px;color:#000;white-space:nowrap;transform:scaleX(0.9428);transform-origin:0 0;left:110.3px;">DIE2_TQ...</div>
<div style="position:absolute;top:308.00px;font-size:13px;line-height:13px;color:#000;white-space:nowrap;left:185.3px;">354</div>
<div style="position:absolute;top:308.00px;font-size:13px;line-height:13px;color:#000;white-space:nowrap;transform:scaleX(1.0502);transform-origin:0 0;left:260.3px;">{X=1,Y=-2}</div>
<div style="position:absolute;top:308.00px;font-size:13px;line-height:13px;color:#000;white-space:nowrap;left:335.3px;">6</div>
<div style="position:absolute;top:308.00px;font-size:13px;line-height:13px;color:#000;white-space:nowrap;left:410.3px;">12.9966</div>
<div style="position:absolute;top:308.00px;font-size:13px;line-height:13px;color:#000;white-space:nowrap;left:485.3px;">-40.7253</div>
<div style="position:absolute;top:308.00px;font-size:13px;line-height:13px;color:#000;white-space:nowrap;left:560.3px;">1</div>
<div style="position:absolute;top:308.00px;font-size:13px;line-height:13px;color:#000;white-space:nowrap;left:635.3px;">0</div>
<div style="position:absolute;top:308.00px;font-size:13px;line-height:13px;color:#000;white-space:nowrap;transform:scaleX(0.8152);transform-origin:0 0;left:710.3px;">NaN</div>
<div style="position:absolute;top:308.00px;font-size:13px;line-height:13px;color:#000;white-space:nowrap;transform:scaleX(0.8152);transform-origin:0 0;left:785.3px;">NaN</div>
<div style="position:absolute;top:308.00px;font-size:13px;line-height:13px;color:#000;white-space:nowrap;left:860.3px;">0.0</div>
<div style="position:absolute;left:15px;top:325px;width:15px;height:20px;background:linear-gradient(to bottom,#ffffff 0px,#ffffff 9px,#f1f2f4 10px,#eceef1 20px);"></div>
<div style="position:absolute;left:15px;top:345px;width:918px;height:1px;background:#d8d8d8;"></div>
<div style="position:absolute;left:30px;top:325px;width:1px;height:20px;background:#d8d8d8;"></div>
<div style="position:absolute;left:105px;top:325px;width:1px;height:20px;background:#d8d8d8;"></div>
<div style="position:absolute;left:180px;top:325px;width:1px;height:20px;background:#d8d8d8;"></div>
<div style="position:absolute;left:255px;top:325px;width:1px;height:20px;background:#d8d8d8;"></div>
<div style="position:absolute;left:330px;top:325px;width:1px;height:20px;background:#d8d8d8;"></div>
<div style="position:absolute;left:405px;top:325px;width:1px;height:20px;background:#d8d8d8;"></div>
<div style="position:absolute;left:480px;top:325px;width:1px;height:20px;background:#d8d8d8;"></div>
<div style="position:absolute;left:555px;top:325px;width:1px;height:20px;background:#d8d8d8;"></div>
<div style="position:absolute;left:630px;top:325px;width:1px;height:20px;background:#d8d8d8;"></div>
<div style="position:absolute;left:705px;top:325px;width:1px;height:20px;background:#d8d8d8;"></div>
<div style="position:absolute;left:780px;top:325px;width:1px;height:20px;background:#d8d8d8;"></div>
<div style="position:absolute;left:855px;top:325px;width:1px;height:20px;background:#d8d8d8;"></div>
<div style="position:absolute;top:329.00px;font-size:13px;line-height:13px;color:#000;white-space:nowrap;left:35.3px;">3</div>
<div style="position:absolute;top:329.00px;font-size:13px;line-height:13px;color:#000;white-space:nowrap;transform:scaleX(0.9428);transform-origin:0 0;left:110.3px;">DIE2_TQ...</div>
<div style="position:absolute;top:329.00px;font-size:13px;line-height:13px;color:#000;white-space:nowrap;left:185.3px;">355</div>
<div style="position:absolute;top:329.00px;font-size:13px;line-height:13px;color:#000;white-space:nowrap;transform:scaleX(1.0502);transform-origin:0 0;left:260.3px;">{X=1,Y=-2}</div>
<div style="position:absolute;top:329.00px;font-size:13px;line-height:13px;color:#000;white-space:nowrap;left:335.3px;">8</div>
<div style="position:absolute;top:329.00px;font-size:13px;line-height:13px;color:#000;white-space:nowrap;left:410.3px;">12.9967</div>
<div style="position:absolute;top:329.00px;font-size:13px;line-height:13px;color:#000;white-space:nowrap;left:485.3px;">-53.1564</div>
<div style="position:absolute;top:329.00px;font-size:13px;line-height:13px;color:#000;white-space:nowrap;left:560.3px;">1</div>
<div style="position:absolute;top:329.00px;font-size:13px;line-height:13px;color:#000;white-space:nowrap;left:635.3px;">0</div>
<div style="position:absolute;top:329.00px;font-size:13px;line-height:13px;color:#000;white-space:nowrap;transform:scaleX(0.8152);transform-origin:0 0;left:710.3px;">NaN</div>
<div style="position:absolute;top:329.00px;font-size:13px;line-height:13px;color:#000;white-space:nowrap;transform:scaleX(0.8152);transform-origin:0 0;left:785.3px;">NaN</div>
<div style="position:absolute;top:329.00px;font-size:13px;line-height:13px;color:#000;white-space:nowrap;left:860.3px;">0.0</div>
<div style="position:absolute;left:15px;top:346px;width:15px;height:20px;background:linear-gradient(to bottom,#ffffff 0px,#ffffff 9px,#f1f2f4 10px,#eceef1 20px);"></div>
<div style="position:absolute;left:15px;top:366px;width:918px;height:1px;background:#d8d8d8;"></div>
<div style="position:absolute;left:30px;top:346px;width:1px;height:20px;background:#d8d8d8;"></div>
<div style="position:absolute;left:105px;top:346px;width:1px;height:20px;background:#d8d8d8;"></div>
<div style="position:absolute;left:180px;top:346px;width:1px;height:20px;background:#d8d8d8;"></div>
<div style="position:absolute;left:255px;top:346px;width:1px;height:20px;background:#d8d8d8;"></div>
<div style="position:absolute;left:330px;top:346px;width:1px;height:20px;background:#d8d8d8;"></div>
<div style="position:absolute;left:405px;top:346px;width:1px;height:20px;background:#d8d8d8;"></div>
<div style="position:absolute;left:480px;top:346px;width:1px;height:20px;background:#d8d8d8;"></div>
<div style="position:absolute;left:555px;top:346px;width:1px;height:20px;background:#d8d8d8;"></div>
<div style="position:absolute;left:630px;top:346px;width:1px;height:20px;background:#d8d8d8;"></div>
<div style="position:absolute;left:705px;top:346px;width:1px;height:20px;background:#d8d8d8;"></div>
<div style="position:absolute;left:780px;top:346px;width:1px;height:20px;background:#d8d8d8;"></div>
<div style="position:absolute;left:855px;top:346px;width:1px;height:20px;background:#d8d8d8;"></div>
<div style="position:absolute;top:350.00px;font-size:13px;line-height:13px;color:#000;white-space:nowrap;left:35.3px;">3</div>
<div style="position:absolute;top:350.00px;font-size:13px;line-height:13px;color:#000;white-space:nowrap;transform:scaleX(0.9428);transform-origin:0 0;left:110.3px;">DIE2_TQ...</div>
<div style="position:absolute;top:350.00px;font-size:13px;line-height:13px;color:#000;white-space:nowrap;left:185.3px;">356</div>
<div style="position:absolute;top:350.00px;font-size:13px;line-height:13px;color:#000;white-space:nowrap;transform:scaleX(1.0502);transform-origin:0 0;left:260.3px;">{X=1,Y=-2}</div>
<div style="position:absolute;top:350.00px;font-size:13px;line-height:13px;color:#000;white-space:nowrap;left:335.3px;">7</div>
<div style="position:absolute;top:350.00px;font-size:13px;line-height:13px;color:#000;white-space:nowrap;left:410.3px;">24.6181</div>
<div style="position:absolute;top:350.00px;font-size:13px;line-height:13px;color:#000;white-space:nowrap;left:485.3px;">-53.2056</div>
<div style="position:absolute;top:350.00px;font-size:13px;line-height:13px;color:#000;white-space:nowrap;left:560.3px;">1</div>
<div style="position:absolute;top:350.00px;font-size:13px;line-height:13px;color:#000;white-space:nowrap;left:635.3px;">0</div>
<div style="position:absolute;top:350.00px;font-size:13px;line-height:13px;color:#000;white-space:nowrap;transform:scaleX(0.8152);transform-origin:0 0;left:710.3px;">NaN</div>
<div style="position:absolute;top:350.00px;font-size:13px;line-height:13px;color:#000;white-space:nowrap;transform:scaleX(0.8152);transform-origin:0 0;left:785.3px;">NaN</div>
<div style="position:absolute;top:350.00px;font-size:13px;line-height:13px;color:#000;white-space:nowrap;left:860.3px;">0.0</div>
<div style="position:absolute;left:15px;top:367px;width:15px;height:20px;background:linear-gradient(to bottom,#ffffff 0px,#ffffff 9px,#f1f2f4 10px,#eceef1 20px);"></div>
<div style="position:absolute;left:15px;top:387px;width:918px;height:1px;background:#d8d8d8;"></div>
<div style="position:absolute;left:30px;top:367px;width:1px;height:20px;background:#d8d8d8;"></div>
<div style="position:absolute;left:105px;top:367px;width:1px;height:20px;background:#d8d8d8;"></div>
<div style="position:absolute;left:180px;top:367px;width:1px;height:20px;background:#d8d8d8;"></div>
<div style="position:absolute;left:255px;top:367px;width:1px;height:20px;background:#d8d8d8;"></div>
<div style="position:absolute;left:330px;top:367px;width:1px;height:20px;background:#d8d8d8;"></div>
<div style="position:absolute;left:405px;top:367px;width:1px;height:20px;background:#d8d8d8;"></div>
<div style="position:absolute;left:480px;top:367px;width:1px;height:20px;background:#d8d8d8;"></div>
<div style="position:absolute;left:555px;top:367px;width:1px;height:20px;background:#d8d8d8;"></div>
<div style="position:absolute;left:630px;top:367px;width:1px;height:20px;background:#d8d8d8;"></div>
<div style="position:absolute;left:705px;top:367px;width:1px;height:20px;background:#d8d8d8;"></div>
<div style="position:absolute;left:780px;top:367px;width:1px;height:20px;background:#d8d8d8;"></div>
<div style="position:absolute;left:855px;top:367px;width:1px;height:20px;background:#d8d8d8;"></div>
<div style="position:absolute;top:371.00px;font-size:13px;line-height:13px;color:#000;white-space:nowrap;left:35.3px;">3</div>
<div style="position:absolute;top:371.00px;font-size:13px;line-height:13px;color:#000;white-space:nowrap;transform:scaleX(0.9428);transform-origin:0 0;left:110.3px;">DIE2_TQ...</div>
<div style="position:absolute;top:371.00px;font-size:13px;line-height:13px;color:#000;white-space:nowrap;left:185.3px;">357</div>
<div style="position:absolute;top:371.00px;font-size:13px;line-height:13px;color:#000;white-space:nowrap;transform:scaleX(1.0502);transform-origin:0 0;left:260.3px;">{X=1,Y=-3}</div>
<div style="position:absolute;top:371.00px;font-size:13px;line-height:13px;color:#000;white-space:nowrap;left:335.3px;">5</div>
<div style="position:absolute;top:371.00px;font-size:13px;line-height:13px;color:#000;white-space:nowrap;left:410.3px;">24.5074</div>
<div style="position:absolute;top:371.00px;font-size:13px;line-height:13px;color:#000;white-space:nowrap;left:485.3px;">-67.6043</div>
<div style="position:absolute;top:371.00px;font-size:13px;line-height:13px;color:#000;white-space:nowrap;left:560.3px;">1</div>
<div style="position:absolute;top:371.00px;font-size:13px;line-height:13px;color:#000;white-space:nowrap;left:635.3px;">0</div>
<div style="position:absolute;top:371.00px;font-size:13px;line-height:13px;color:#000;white-space:nowrap;transform:scaleX(0.8152);transform-origin:0 0;left:710.3px;">NaN</div>
<div style="position:absolute;top:371.00px;font-size:13px;line-height:13px;color:#000;white-space:nowrap;transform:scaleX(0.8152);transform-origin:0 0;left:785.3px;">NaN</div>
<div style="position:absolute;top:371.00px;font-size:13px;line-height:13px;color:#000;white-space:nowrap;left:860.3px;">0.0</div>
<div style="position:absolute;left:15px;top:388px;width:15px;height:20px;background:linear-gradient(to bottom,#ffffff 0px,#ffffff 9px,#f1f2f4 10px,#eceef1 20px);"></div>
<div style="position:absolute;left:15px;top:408px;width:918px;height:1px;background:#d8d8d8;"></div>
<div style="position:absolute;left:30px;top:388px;width:1px;height:20px;background:#d8d8d8;"></div>
<div style="position:absolute;left:105px;top:388px;width:1px;height:20px;background:#d8d8d8;"></div>
<div style="position:absolute;left:180px;top:388px;width:1px;height:20px;background:#d8d8d8;"></div>
<div style="position:absolute;left:255px;top:388px;width:1px;height:20px;background:#d8d8d8;"></div>
<div style="position:absolute;left:330px;top:388px;width:1px;height:20px;background:#d8d8d8;"></div>
<div style="position:absolute;left:405px;top:388px;width:1px;height:20px;background:#d8d8d8;"></div>
<div style="position:absolute;left:480px;top:388px;width:1px;height:20px;background:#d8d8d8;"></div>
<div style="position:absolute;left:555px;top:388px;width:1px;height:20px;background:#d8d8d8;"></div>
<div style="position:absolute;left:630px;top:388px;width:1px;height:20px;background:#d8d8d8;"></div>
<div style="position:absolute;left:705px;top:388px;width:1px;height:20px;background:#d8d8d8;"></div>
<div style="position:absolute;left:780px;top:388px;width:1px;height:20px;background:#d8d8d8;"></div>
<div style="position:absolute;left:855px;top:388px;width:1px;height:20px;background:#d8d8d8;"></div>
<div style="position:absolute;top:392.00px;font-size:13px;line-height:13px;color:#000;white-space:nowrap;left:35.3px;">3</div>
<div style="position:absolute;top:392.00px;font-size:13px;line-height:13px;color:#000;white-space:nowrap;transform:scaleX(0.9428);transform-origin:0 0;left:110.3px;">DIE2_TQ...</div>
<div style="position:absolute;top:392.00px;font-size:13px;line-height:13px;color:#000;white-space:nowrap;left:185.3px;">358</div>
<div style="position:absolute;top:392.00px;font-size:13px;line-height:13px;color:#000;white-space:nowrap;transform:scaleX(1.0502);transform-origin:0 0;left:260.3px;">{X=1,Y=-3}</div>
<div style="position:absolute;top:392.00px;font-size:13px;line-height:13px;color:#000;white-space:nowrap;left:335.3px;">6</div>
<div style="position:absolute;top:392.00px;font-size:13px;line-height:13px;color:#000;white-space:nowrap;left:410.3px;">12.9966</div>
<div style="position:absolute;top:392.00px;font-size:13px;line-height:13px;color:#000;white-space:nowrap;left:485.3px;">-67.6053</div>
<div style="position:absolute;top:392.00px;font-size:13px;line-height:13px;color:#000;white-space:nowrap;left:560.3px;">1</div>
<div style="position:absolute;top:392.00px;font-size:13px;line-height:13px;color:#000;white-space:nowrap;left:635.3px;">0</div>
<div style="position:absolute;top:392.00px;font-size:13px;line-height:13px;color:#000;white-space:nowrap;transform:scaleX(0.8152);transform-origin:0 0;left:710.3px;">NaN</div>
<div style="position:absolute;top:392.00px;font-size:13px;line-height:13px;color:#000;white-space:nowrap;transform:scaleX(0.8152);transform-origin:0 0;left:785.3px;">NaN</div>
<div style="position:absolute;top:392.00px;font-size:13px;line-height:13px;color:#000;white-space:nowrap;left:860.3px;">0.0</div>
<div style="position:absolute;left:15px;top:409px;width:15px;height:20px;background:linear-gradient(to bottom,#ffffff 0px,#ffffff 9px,#f1f2f4 10px,#eceef1 20px);"></div>
<div style="position:absolute;left:15px;top:429px;width:918px;height:1px;background:#d8d8d8;"></div>
<div style="position:absolute;left:30px;top:409px;width:1px;height:20px;background:#d8d8d8;"></div>
<div style="position:absolute;left:105px;top:409px;width:1px;height:20px;background:#d8d8d8;"></div>
<div style="position:absolute;left:180px;top:409px;width:1px;height:20px;background:#d8d8d8;"></div>
<div style="position:absolute;left:255px;top:409px;width:1px;height:20px;background:#d8d8d8;"></div>
<div style="position:absolute;left:330px;top:409px;width:1px;height:20px;background:#d8d8d8;"></div>
<div style="position:absolute;left:405px;top:409px;width:1px;height:20px;background:#d8d8d8;"></div>
<div style="position:absolute;left:480px;top:409px;width:1px;height:20px;background:#d8d8d8;"></div>
<div style="position:absolute;left:555px;top:409px;width:1px;height:20px;background:#d8d8d8;"></div>
<div style="position:absolute;left:630px;top:409px;width:1px;height:20px;background:#d8d8d8;"></div>
<div style="position:absolute;left:705px;top:409px;width:1px;height:20px;background:#d8d8d8;"></div>
<div style="position:absolute;left:780px;top:409px;width:1px;height:20px;background:#d8d8d8;"></div>
<div style="position:absolute;left:855px;top:409px;width:1px;height:20px;background:#d8d8d8;"></div>
<div style="position:absolute;top:413.00px;font-size:13px;line-height:13px;color:#000;white-space:nowrap;left:35.3px;">3</div>
<div style="position:absolute;top:413.00px;font-size:13px;line-height:13px;color:#000;white-space:nowrap;transform:scaleX(0.9428);transform-origin:0 0;left:110.3px;">DIE2_TQ...</div>
<div style="position:absolute;top:413.00px;font-size:13px;line-height:13px;color:#000;white-space:nowrap;left:185.3px;">359</div>
<div style="position:absolute;top:413.00px;font-size:13px;line-height:13px;color:#000;white-space:nowrap;transform:scaleX(1.0502);transform-origin:0 0;left:260.3px;">{X=1,Y=-3}</div>
<div style="position:absolute;top:413.00px;font-size:13px;line-height:13px;color:#000;white-space:nowrap;left:335.3px;">8</div>
<div style="position:absolute;top:413.00px;font-size:13px;line-height:13px;color:#000;white-space:nowrap;left:410.3px;">12.9967</div>
<div style="position:absolute;top:413.00px;font-size:13px;line-height:13px;color:#000;white-space:nowrap;left:485.3px;">-80.0364</div>
<div style="position:absolute;top:413.00px;font-size:13px;line-height:13px;color:#000;white-space:nowrap;left:560.3px;">1</div>
<div style="position:absolute;top:413.00px;font-size:13px;line-height:13px;color:#000;white-space:nowrap;left:635.3px;">0</div>
<div style="position:absolute;top:413.00px;font-size:13px;line-height:13px;color:#000;white-space:nowrap;transform:scaleX(0.8152);transform-origin:0 0;left:710.3px;">NaN</div>
<div style="position:absolute;top:413.00px;font-size:13px;line-height:13px;color:#000;white-space:nowrap;transform:scaleX(0.8152);transform-origin:0 0;left:785.3px;">NaN</div>
<div style="position:absolute;top:413.00px;font-size:13px;line-height:13px;color:#000;white-space:nowrap;left:860.3px;">0.0</div>
<div style="position:absolute;left:15px;top:430px;width:15px;height:20px;background:linear-gradient(to bottom,#ffffff 0px,#ffffff 9px,#f1f2f4 10px,#eceef1 20px);"></div>
<div style="position:absolute;left:15px;top:450px;width:918px;height:1px;background:#d8d8d8;"></div>
<div style="position:absolute;left:30px;top:430px;width:1px;height:20px;background:#d8d8d8;"></div>
<div style="position:absolute;left:105px;top:430px;width:1px;height:20px;background:#d8d8d8;"></div>
<div style="position:absolute;left:180px;top:430px;width:1px;height:20px;background:#d8d8d8;"></div>
<div style="position:absolute;left:255px;top:430px;width:1px;height:20px;background:#d8d8d8;"></div>
<div style="position:absolute;left:330px;top:430px;width:1px;height:20px;background:#d8d8d8;"></div>
<div style="position:absolute;left:405px;top:430px;width:1px;height:20px;background:#d8d8d8;"></div>
<div style="position:absolute;left:480px;top:430px;width:1px;height:20px;background:#d8d8d8;"></div>
<div style="position:absolute;left:555px;top:430px;width:1px;height:20px;background:#d8d8d8;"></div>
<div style="position:absolute;left:630px;top:430px;width:1px;height:20px;background:#d8d8d8;"></div>
<div style="position:absolute;left:705px;top:430px;width:1px;height:20px;background:#d8d8d8;"></div>
<div style="position:absolute;left:780px;top:430px;width:1px;height:20px;background:#d8d8d8;"></div>
<div style="position:absolute;left:855px;top:430px;width:1px;height:20px;background:#d8d8d8;"></div>
<div style="position:absolute;top:434.00px;font-size:13px;line-height:13px;color:#000;white-space:nowrap;left:35.3px;">3</div>
<div style="position:absolute;top:434.00px;font-size:13px;line-height:13px;color:#000;white-space:nowrap;transform:scaleX(0.9428);transform-origin:0 0;left:110.3px;">DIE2_TQ...</div>
<div style="position:absolute;top:434.00px;font-size:13px;line-height:13px;color:#000;white-space:nowrap;left:185.3px;">360</div>
<div style="position:absolute;top:434.00px;font-size:13px;line-height:13px;color:#000;white-space:nowrap;transform:scaleX(1.0502);transform-origin:0 0;left:260.3px;">{X=1,Y=-3}</div>
<div style="position:absolute;top:434.00px;font-size:13px;line-height:13px;color:#000;white-space:nowrap;left:335.3px;">7</div>
<div style="position:absolute;top:434.00px;font-size:13px;line-height:13px;color:#000;white-space:nowrap;left:410.3px;">24.6181</div>
<div style="position:absolute;top:434.00px;font-size:13px;line-height:13px;color:#000;white-space:nowrap;left:485.3px;">-80.0856</div>
<div style="position:absolute;top:434.00px;font-size:13px;line-height:13px;color:#000;white-space:nowrap;left:560.3px;">1</div>
<div style="position:absolute;top:434.00px;font-size:13px;line-height:13px;color:#000;white-space:nowrap;left:635.3px;">0</div>
<div style="position:absolute;top:434.00px;font-size:13px;line-height:13px;color:#000;white-space:nowrap;transform:scaleX(0.8152);transform-origin:0 0;left:710.3px;">NaN</div>
<div style="position:absolute;top:434.00px;font-size:13px;line-height:13px;color:#000;white-space:nowrap;transform:scaleX(0.8152);transform-origin:0 0;left:785.3px;">NaN</div>
<div style="position:absolute;top:434.00px;font-size:13px;line-height:13px;color:#000;white-space:nowrap;left:860.3px;">0.0</div>
<div style="position:absolute;left:15px;top:451px;width:15px;height:20px;background:linear-gradient(to bottom,#ffffff 0px,#ffffff 9px,#f1f2f4 10px,#eceef1 20px);"></div>
<div style="position:absolute;left:15px;top:471px;width:918px;height:1px;background:#d8d8d8;"></div>
<div style="position:absolute;left:30px;top:451px;width:1px;height:20px;background:#d8d8d8;"></div>
<div style="position:absolute;left:105px;top:451px;width:1px;height:20px;background:#d8d8d8;"></div>
<div style="position:absolute;left:180px;top:451px;width:1px;height:20px;background:#d8d8d8;"></div>
<div style="position:absolute;left:255px;top:451px;width:1px;height:20px;background:#d8d8d8;"></div>
<div style="position:absolute;left:330px;top:451px;width:1px;height:20px;background:#d8d8d8;"></div>
<div style="position:absolute;left:405px;top:451px;width:1px;height:20px;background:#d8d8d8;"></div>
<div style="position:absolute;left:480px;top:451px;width:1px;height:20px;background:#d8d8d8;"></div>
<div style="position:absolute;left:555px;top:451px;width:1px;height:20px;background:#d8d8d8;"></div>
<div style="position:absolute;left:630px;top:451px;width:1px;height:20px;background:#d8d8d8;"></div>
<div style="position:absolute;left:705px;top:451px;width:1px;height:20px;background:#d8d8d8;"></div>
<div style="position:absolute;left:780px;top:451px;width:1px;height:20px;background:#d8d8d8;"></div>
<div style="position:absolute;left:855px;top:451px;width:1px;height:20px;background:#d8d8d8;"></div>
<div style="position:absolute;top:455.00px;font-size:13px;line-height:13px;color:#000;white-space:nowrap;left:35.3px;">3</div>
<div style="position:absolute;top:455.00px;font-size:13px;line-height:13px;color:#000;white-space:nowrap;transform:scaleX(0.9428);transform-origin:0 0;left:110.3px;">DIE2_TQ...</div>
<div style="position:absolute;top:455.00px;font-size:13px;line-height:13px;color:#000;white-space:nowrap;left:185.3px;">361</div>
<div style="position:absolute;top:455.00px;font-size:13px;line-height:13px;color:#000;white-space:nowrap;transform:scaleX(1.0502);transform-origin:0 0;left:260.3px;">{X=1,Y=-4}</div>
<div style="position:absolute;top:455.00px;font-size:13px;line-height:13px;color:#000;white-space:nowrap;left:335.3px;">5</div>
<div style="position:absolute;top:455.00px;font-size:13px;line-height:13px;color:#000;white-space:nowrap;left:410.3px;">24.5074</div>
<div style="position:absolute;top:455.00px;font-size:13px;line-height:13px;color:#000;white-space:nowrap;left:485.3px;">-94.4843</div>
<div style="position:absolute;top:455.00px;font-size:13px;line-height:13px;color:#000;white-space:nowrap;left:560.3px;">1</div>
<div style="position:absolute;top:455.00px;font-size:13px;line-height:13px;color:#000;white-space:nowrap;left:635.3px;">0</div>
<div style="position:absolute;top:455.00px;font-size:13px;line-height:13px;color:#000;white-space:nowrap;transform:scaleX(0.8152);transform-origin:0 0;left:710.3px;">NaN</div>
<div style="position:absolute;top:455.00px;font-size:13px;line-height:13px;color:#000;white-space:nowrap;transform:scaleX(0.8152);transform-origin:0 0;left:785.3px;">NaN</div>
<div style="position:absolute;top:455.00px;font-size:13px;line-height:13px;color:#000;white-space:nowrap;left:860.3px;">0.0</div>
<div style="position:absolute;left:15px;top:472px;width:15px;height:20px;background:linear-gradient(to bottom,#ffffff 0px,#ffffff 9px,#f1f2f4 10px,#eceef1 20px);"></div>
<div style="position:absolute;left:15px;top:492px;width:918px;height:1px;background:#d8d8d8;"></div>
<div style="position:absolute;left:30px;top:472px;width:1px;height:20px;background:#d8d8d8;"></div>
<div style="position:absolute;left:105px;top:472px;width:1px;height:20px;background:#d8d8d8;"></div>
<div style="position:absolute;left:180px;top:472px;width:1px;height:20px;background:#d8d8d8;"></div>
<div style="position:absolute;left:255px;top:472px;width:1px;height:20px;background:#d8d8d8;"></div>
<div style="position:absolute;left:330px;top:472px;width:1px;height:20px;background:#d8d8d8;"></div>
<div style="position:absolute;left:405px;top:472px;width:1px;height:20px;background:#d8d8d8;"></div>
<div style="position:absolute;left:480px;top:472px;width:1px;height:20px;background:#d8d8d8;"></div>
<div style="position:absolute;left:555px;top:472px;width:1px;height:20px;background:#d8d8d8;"></div>
<div style="position:absolute;left:630px;top:472px;width:1px;height:20px;background:#d8d8d8;"></div>
<div style="position:absolute;left:705px;top:472px;width:1px;height:20px;background:#d8d8d8;"></div>
<div style="position:absolute;left:780px;top:472px;width:1px;height:20px;background:#d8d8d8;"></div>
<div style="position:absolute;left:855px;top:472px;width:1px;height:20px;background:#d8d8d8;"></div>
<div style="position:absolute;top:476.00px;font-size:13px;line-height:13px;color:#000;white-space:nowrap;left:35.3px;">3</div>
<div style="position:absolute;top:476.00px;font-size:13px;line-height:13px;color:#000;white-space:nowrap;transform:scaleX(0.9428);transform-origin:0 0;left:110.3px;">DIE2_TQ...</div>
<div style="position:absolute;top:476.00px;font-size:13px;line-height:13px;color:#000;white-space:nowrap;left:185.3px;">362</div>
<div style="position:absolute;top:476.00px;font-size:13px;line-height:13px;color:#000;white-space:nowrap;transform:scaleX(1.0502);transform-origin:0 0;left:260.3px;">{X=1,Y=-4}</div>
<div style="position:absolute;top:476.00px;font-size:13px;line-height:13px;color:#000;white-space:nowrap;left:335.3px;">6</div>
<div style="position:absolute;top:476.00px;font-size:13px;line-height:13px;color:#000;white-space:nowrap;left:410.3px;">12.9966</div>
<div style="position:absolute;top:476.00px;font-size:13px;line-height:13px;color:#000;white-space:nowrap;left:485.3px;">-94.4853</div>
<div style="position:absolute;top:476.00px;font-size:13px;line-height:13px;color:#000;white-space:nowrap;left:560.3px;">1</div>
<div style="position:absolute;top:476.00px;font-size:13px;line-height:13px;color:#000;white-space:nowrap;left:635.3px;">0</div>
<div style="position:absolute;top:476.00px;font-size:13px;line-height:13px;color:#000;white-space:nowrap;transform:scaleX(0.8152);transform-origin:0 0;left:710.3px;">NaN</div>
<div style="position:absolute;top:476.00px;font-size:13px;line-height:13px;color:#000;white-space:nowrap;transform:scaleX(0.8152);transform-origin:0 0;left:785.3px;">NaN</div>
<div style="position:absolute;top:476.00px;font-size:13px;line-height:13px;color:#000;white-space:nowrap;left:860.3px;">0.0</div>
<div style="position:absolute;left:15px;top:493px;width:15px;height:20px;background:linear-gradient(to bottom,#ffffff 0px,#ffffff 9px,#f1f2f4 10px,#eceef1 20px);"></div>
<div style="position:absolute;left:15px;top:513px;width:918px;height:1px;background:#d8d8d8;"></div>
<div style="position:absolute;left:30px;top:493px;width:1px;height:20px;background:#d8d8d8;"></div>
<div style="position:absolute;left:105px;top:493px;width:1px;height:20px;background:#d8d8d8;"></div>
<div style="position:absolute;left:180px;top:493px;width:1px;height:20px;background:#d8d8d8;"></div>
<div style="position:absolute;left:255px;top:493px;width:1px;height:20px;background:#d8d8d8;"></div>
<div style="position:absolute;left:330px;top:493px;width:1px;height:20px;background:#d8d8d8;"></div>
<div style="position:absolute;left:405px;top:493px;width:1px;height:20px;background:#d8d8d8;"></div>
<div style="position:absolute;left:480px;top:493px;width:1px;height:20px;background:#d8d8d8;"></div>
<div style="position:absolute;left:555px;top:493px;width:1px;height:20px;background:#d8d8d8;"></div>
<div style="position:absolute;left:630px;top:493px;width:1px;height:20px;background:#d8d8d8;"></div>
<div style="position:absolute;left:705px;top:493px;width:1px;height:20px;background:#d8d8d8;"></div>
<div style="position:absolute;left:780px;top:493px;width:1px;height:20px;background:#d8d8d8;"></div>
<div style="position:absolute;left:855px;top:493px;width:1px;height:20px;background:#d8d8d8;"></div>
<div style="position:absolute;top:497.00px;font-size:13px;line-height:13px;color:#000;white-space:nowrap;left:35.3px;">3</div>
<div style="position:absolute;top:497.00px;font-size:13px;line-height:13px;color:#000;white-space:nowrap;transform:scaleX(0.9428);transform-origin:0 0;left:110.3px;">DIE2_TQ...</div>
<div style="position:absolute;top:497.00px;font-size:13px;line-height:13px;color:#000;white-space:nowrap;left:185.3px;">363</div>
<div style="position:absolute;top:497.00px;font-size:13px;line-height:13px;color:#000;white-space:nowrap;transform:scaleX(1.0502);transform-origin:0 0;left:260.3px;">{X=1,Y=-4}</div>
<div style="position:absolute;top:497.00px;font-size:13px;line-height:13px;color:#000;white-space:nowrap;left:335.3px;">8</div>
<div style="position:absolute;top:497.00px;font-size:13px;line-height:13px;color:#000;white-space:nowrap;left:410.3px;">12.9967</div>
<div style="position:absolute;top:497.00px;font-size:13px;line-height:13px;color:#000;white-space:nowrap;left:485.3px;">-106.9164</div>
<div style="position:absolute;top:497.00px;font-size:13px;line-height:13px;color:#000;white-space:nowrap;left:560.3px;">1</div>
<div style="position:absolute;top:497.00px;font-size:13px;line-height:13px;color:#000;white-space:nowrap;left:635.3px;">0</div>
<div style="position:absolute;top:497.00px;font-size:13px;line-height:13px;color:#000;white-space:nowrap;transform:scaleX(0.8152);transform-origin:0 0;left:710.3px;">NaN</div>
<div style="position:absolute;top:497.00px;font-size:13px;line-height:13px;color:#000;white-space:nowrap;transform:scaleX(0.8152);transform-origin:0 0;left:785.3px;">NaN</div>
<div style="position:absolute;top:497.00px;font-size:13px;line-height:13px;color:#000;white-space:nowrap;left:860.3px;">0.0</div>
<div style="position:absolute;left:15px;top:514px;width:15px;height:20px;background:linear-gradient(to bottom,#ffffff 0px,#ffffff 9px,#f1f2f4 10px,#eceef1 20px);"></div>
<div style="position:absolute;left:106px;top:514px;width:825px;height:20px;background:#e9e9e9;"></div>
<div style="position:absolute;left:15px;top:534px;width:918px;height:1px;background:#d8d8d8;"></div>
<div style="position:absolute;left:30px;top:514px;width:1px;height:20px;background:#d8d8d8;"></div>
<div style="position:absolute;left:105px;top:514px;width:1px;height:20px;background:#d8d8d8;"></div>
<div style="position:absolute;left:180px;top:514px;width:1px;height:20px;background:#d8d8d8;"></div>
<div style="position:absolute;left:255px;top:514px;width:1px;height:20px;background:#d8d8d8;"></div>
<div style="position:absolute;left:330px;top:514px;width:1px;height:20px;background:#d8d8d8;"></div>
<div style="position:absolute;left:405px;top:514px;width:1px;height:20px;background:#d8d8d8;"></div>
<div style="position:absolute;left:480px;top:514px;width:1px;height:20px;background:#d8d8d8;"></div>
<div style="position:absolute;left:555px;top:514px;width:1px;height:20px;background:#d8d8d8;"></div>
<div style="position:absolute;left:630px;top:514px;width:1px;height:20px;background:#d8d8d8;"></div>
<div style="position:absolute;left:705px;top:514px;width:1px;height:20px;background:#d8d8d8;"></div>
<div style="position:absolute;left:780px;top:514px;width:1px;height:20px;background:#d8d8d8;"></div>
<div style="position:absolute;left:855px;top:514px;width:1px;height:20px;background:#d8d8d8;"></div>
<div style="position:absolute;top:518.00px;font-size:13px;line-height:13px;color:#000;white-space:nowrap;left:35.3px;">3</div>
<div style="position:absolute;top:518.00px;font-size:13px;line-height:13px;color:#000;white-space:nowrap;transform:scaleX(0.9428);transform-origin:0 0;left:110.3px;">DIE2_TQ...</div>
<div style="position:absolute;top:518.00px;font-size:13px;line-height:13px;color:#000;white-space:nowrap;left:185.3px;">364</div>
<div style="position:absolute;top:518.00px;font-size:13px;line-height:13px;color:#000;white-space:nowrap;transform:scaleX(1.0502);transform-origin:0 0;left:260.3px;">{X=1,Y=-4}</div>
<div style="position:absolute;top:518.00px;font-size:13px;line-height:13px;color:#000;white-space:nowrap;left:335.3px;">7</div>
<div style="position:absolute;top:518.00px;font-size:13px;line-height:13px;color:#000;white-space:nowrap;left:410.3px;">24.6181</div>
<div style="position:absolute;top:518.00px;font-size:13px;line-height:13px;color:#000;white-space:nowrap;left:485.3px;">-106.9656</div>
<div style="position:absolute;top:518.00px;font-size:13px;line-height:13px;color:#000;white-space:nowrap;left:560.3px;">1</div>
<div style="position:absolute;top:518.00px;font-size:13px;line-height:13px;color:#000;white-space:nowrap;left:635.3px;">0</div>
<div style="position:absolute;top:518.00px;font-size:13px;line-height:13px;color:#000;white-space:nowrap;transform:scaleX(0.8152);transform-origin:0 0;left:710.3px;">NaN</div>
<div style="position:absolute;top:518.00px;font-size:13px;line-height:13px;color:#000;white-space:nowrap;transform:scaleX(0.8152);transform-origin:0 0;left:785.3px;">NaN</div>
<div style="position:absolute;top:518.00px;font-size:13px;line-height:13px;color:#000;white-space:nowrap;left:860.3px;">0.0</div>
</div>
<svg style="position:absolute;left:20px;top:520px;" width="6" height="9" viewBox="0 0 6 9"><polygon points="0.5,0.5 5,4.5 0.5,8.5" fill="#000"/></svg>
<div style="position:absolute;left:15px;top:535px;width:918px;height:17px;background:#fff;"></div>
<div style="position:absolute;left:931px;top:157px;width:17px;height:394px;background:linear-gradient(to right,#e6e6e6,#f2f2f2 40%,#f0f0f0);"></div>
<svg style="position:absolute;left:936px;top:162px;" width="9" height="6" viewBox="0 0 9 6"><polygon points="0.5,5 4.5,0.5 8.5,5" fill="#3a3a3a"/></svg>
<div style="position:absolute;left:933px;top:517px;width:15px;height:18px;box-sizing:border-box;border:1px solid #8f8f8f;border-radius:2px;background:linear-gradient(to right,#f4f4f4,#e2e2e2 70%,#cfcfcf);"></div>
<svg style="position:absolute;left:936px;top:521px;" width="9" height="9" viewBox="0 0 9 9"><path d="M1,1.5 H8 M1,4.5 H8 M1,7.5 H8" stroke="#3c3c3c" stroke-width="1.2"/></svg>
<svg style="position:absolute;left:936px;top:540px;" width="9" height="6" viewBox="0 0 9 6"><polygon points="0.5,0.5 8.5,0.5 4.5,5" fill="#3a3a3a"/></svg>
<div style="position:absolute;left:15px;top:552px;width:917px;height:16px;background:linear-gradient(to bottom,#e6e6e6,#f2f2f2 40%,#f0f0f0);"></div>
<svg style="position:absolute;left:20px;top:555px;" width="6" height="9" viewBox="0 0 6 9"><polygon points="5.5,0.5 0.5,4.5 5.5,8.5" fill="#3a3a3a"/></svg>
<div style="position:absolute;left:32px;top:552px;width:460px;height:15px;box-sizing:border-box;border:1px solid #999;border-radius:2px;background:linear-gradient(to bottom,#f6f6f6,#ebebeb 45%,#d8d8d8 50%,#cfcfcf);"></div>
<svg style="position:absolute;left:257px;top:555px;" width="10" height="9" viewBox="0 0 10 9"><path d="M1.5,1 V8 M4.5,1 V8 M7.5,1 V8" stroke="#3c3c3c" stroke-width="1.2"/></svg>
<svg style="position:absolute;left:921px;top:555px;" width="6" height="9" viewBox="0 0 6 9"><polygon points="0.5,0.5 5.5,4.5 0.5,8.5" fill="#3a3a3a"/></svg>
<div style="position:absolute;left:932px;top:551px;width:16px;height:17px;background:#f0f0f0;"></div>
<div style="position:absolute;left:8px;top:577px;width:948px;height:345px;box-sizing:border-box;border:1px solid #d5dfe7;background:#f0f0f0;"></div>
<div style="position:absolute;top:583.93px;font-size:17.8px;line-height:17.8px;color:#474747;white-space:nowrap;transform:scaleX(0.9978);transform-origin:0 0;left:20px;">Job Queue</div>
<div style="position:absolute;left:10px;top:603px;width:620px;height:4px;background:linear-gradient(to bottom,rgba(0,0,0,0.10) 0px,rgba(0,0,0,0.05) 1.5px,rgba(0,0,0,0) 4px);-webkit-mask-image:linear-gradient(to right,rgba(0,0,0,0.2) 0%,#000 6%,#000 45%,rgba(0,0,0,0) 100%);"></div>
<div style="position:absolute;left:718px;top:577px;width:46px;height:35px;box-sizing:border-box;border:1px solid #6e6e6e;border-radius:3px;background:linear-gradient(to bottom,#f2f2f2 0px,#ebebeb 10px,#dddddd 11px,#cfcfcf 34px);box-shadow:inset 0 0 0 1px rgba(255,255,255,0.6);"></div>
<svg style="position:absolute;left:724px;top:580px;" width="34" height="30" viewBox="0 0 34 30"><defs><linearGradient id="gbl" x1="0" y1="0" x2="0" y2="1"><stop offset="0" stop-color="#d7eefb"/><stop offset="0.5" stop-color="#7fb6e6"/><stop offset="1" stop-color="#4e8fd0"/></linearGradient></defs><circle cx="17" cy="15" r="13.5" fill="url(#gbl)" stroke="#3d74bf" stroke-width="1"/><path d="M14.5,8 H19.5 V12.5 H24 V17.5 H19.5 V22 H14.5 V17.5 H10 V12.5 H14.5 Z" fill="#f4f6fb" stroke="#3d74bf" stroke-width="0.8"/></svg>
<div style="position:absolute;left:774px;top:577px;width:46px;height:35px;box-sizing:border-box;border:1px solid #6e6e6e;border-radius:3px;background:linear-gradient(to bottom,#f2f2f2 0px,#ebebeb 10px,#dddddd 11px,#cfcfcf 34px);box-shadow:inset 0 0 0 1px rgba(255,255,255,0.6);"></div>
<svg style="position:absolute;left:780px;top:580px;" width="34" height="30" viewBox="0 0 34 30"><defs><linearGradient id="gbl2" x1="0" y1="0" x2="0" y2="1"><stop offset="0" stop-color="#d7eefb"/><stop offset="0.5" stop-color="#7fb6e6"/><stop offset="1" stop-color="#4e8fd0"/></linearGradient></defs><circle cx="17" cy="15" r="13.5" fill="url(#gbl2)" stroke="#3d74bf" stroke-width="1"/><rect x="8.5" y="12.5" width="17" height="5" rx="1.5" fill="#f4f6fb" stroke="#3d74bf" stroke-width="0.8"/></svg>
<div style="position:absolute;left:830px;top:577px;width:46px;height:35px;box-sizing:border-box;border:1px solid #6e6e6e;border-radius:3px;background:linear-gradient(to bottom,#f2f2f2 0px,#ebebeb 10px,#dddddd 11px,#cfcfcf 34px);box-shadow:inset 0 0 0 1px rgba(255,255,255,0.6);"></div>
<svg style="position:absolute;left:836px;top:580px;" width="34" height="30" viewBox="0 0 34 30"><defs><linearGradient id="gbl3" x1="0" y1="0" x2="0" y2="1"><stop offset="0" stop-color="#d7eefb"/><stop offset="0.5" stop-color="#7fb6e6"/><stop offset="1" stop-color="#4e8fd0"/></linearGradient></defs><path d="M12,2.5 H22 V11.5 H28 L17,27.5 L6,11.5 H12 Z" fill="url(#gbl3)" stroke="#4a85cc" stroke-width="1"/></svg>
<div style="position:absolute;left:886px;top:577px;width:46px;height:35px;box-sizing:border-box;border:1px solid #6e6e6e;border-radius:3px;background:linear-gradient(to bottom,#f2f2f2 0px,#ebebeb 10px,#dddddd 11px,#cfcfcf 34px);box-shadow:inset 0 0 0 1px rgba(255,255,255,0.6);"></div>
<svg style="position:absolute;left:892px;top:580px;" width="34" height="30" viewBox="0 0 34 30"><defs><linearGradient id="gbl4" x1="0" y1="0" x2="0" y2="1"><stop offset="0" stop-color="#d7eefb"/><stop offset="0.5" stop-color="#7fb6e6"/><stop offset="1" stop-color="#4e8fd0"/></linearGradient></defs><path d="M12,26.5 H22 V18 H27 L17,2 L7,18 H12 Z" fill="url(#gbl4)" stroke="#4a85cc" stroke-width="1"/></svg>
<div style="position:absolute;left:16px;top:618px;width:932px;height:296px;box-sizing:border-box;border:1px solid #d4d4d4;background:#fff;"></div>
<div style="position:absolute;left:17px;top:619px;width:930px;height:26px;background:linear-gradient(to bottom,#ffffff 0px,#ffffff 11px,#f1f2f4 12px,#eceef1 26px);"></div>
<div style="position:absolute;left:17px;top:645px;width:930px;height:1px;background:#d8d8d8;"></div>
<div style="position:absolute;left:149px;top:619px;width:1px;height:26px;background:#dcdcdc;"></div>
<div style="position:absolute;left:280px;top:619px;width:1px;height:26px;background:#dcdcdc;"></div>
<div style="position:absolute;left:412px;top:619px;width:1px;height:26px;background:#dcdcdc;"></div>
<div style="position:absolute;left:544px;top:619px;width:1px;height:26px;background:#dcdcdc;"></div>
<div style="position:absolute;left:676px;top:619px;width:1px;height:26px;background:#dcdcdc;"></div>
<div style="position:absolute;left:809px;top:619px;width:1px;height:26px;background:#dcdcdc;"></div>
<div style="position:absolute;top:626.34px;font-size:12px;line-height:12px;color:#000;white-space:nowrap;left:-417.0px;width:1000px;text-align:center;">Job ID</div>
<div style="position:absolute;top:626.34px;font-size:12px;line-height:12px;color:#000;white-space:nowrap;left:-284.75px;width:1000px;text-align:center;">Carrier ID</div>
<div style="position:absolute;top:626.34px;font-size:12px;line-height:12px;color:#000;white-space:nowrap;left:-153.0px;width:1000px;text-align:center;">Status</div>
<div style="position:absolute;top:626.34px;font-size:12px;line-height:12px;color:#000;white-space:nowrap;left:-21.0px;width:1000px;text-align:center;">Lot ID</div>
<div style="position:absolute;top:626.34px;font-size:12px;line-height:12px;color:#000;white-space:nowrap;left:111.0px;width:1000px;text-align:center;">Wafers</div>
<div style="position:absolute;top:626.34px;font-size:12px;line-height:12px;color:#000;white-space:nowrap;left:243.25px;width:1000px;text-align:center;">Recipe</div>
<div style="position:absolute;top:626.34px;font-size:12px;line-height:12px;color:#000;white-space:nowrap;left:378.5px;width:1000px;text-align:center;">Loadport</div>
<div style="position:absolute;left:964px;top:76px;width:473px;height:501px;box-sizing:border-box;border:1px solid #d5dfe7;background:#f0f0f0;"></div>
<div style="position:absolute;top:83.27px;font-size:17.4px;line-height:17.4px;color:#474747;white-space:nowrap;transform:scaleX(0.9967);transform-origin:0 0;left:976px;">Image</div>
<div style="position:absolute;left:966px;top:102px;width:320px;height:4px;background:linear-gradient(to bottom,rgba(0,0,0,0.10) 0px,rgba(0,0,0,0.05) 1.5px,rgba(0,0,0,0) 4px);-webkit-mask-image:linear-gradient(to right,rgba(0,0,0,0.2) 0%,#000 6%,#000 45%,rgba(0,0,0,0) 100%);"></div>
<div style="position:absolute;left:966px;top:111px;width:469px;height:464px;box-sizing:border-box;border:1px solid #d5dfe7;background:#eceef2;"></div>
<div style="position:absolute;left:970px;top:113px;width:460px;height:460px;background:radial-gradient(ellipse 135px 145px at 220px 226px, rgba(194,194,194,1) 0%, rgba(184,184,184,0.88) 25%, rgba(168,168,168,0.52) 50%, rgba(145,145,145,0.15) 75%, rgba(140,140,140,0) 100%),radial-gradient(ellipse 120px 95px at 110px 190px, rgba(104,104,104,0.55) 0%, rgba(110,110,110,0) 100%),radial-gradient(ellipse 120px 105px at 355px 170px, rgba(104,104,104,0.6) 0%, rgba(110,110,110,0) 100%),radial-gradient(ellipse 140px 80px at 160px 322px, rgba(104,104,104,0.55) 0%, rgba(110,110,110,0) 100%),radial-gradient(ellipse 120px 95px at 350px 315px, rgba(104,104,104,0.6) 0%, rgba(110,110,110,0) 100%),radial-gradient(ellipse 150px 80px at 265px 468px, rgba(200,200,200,0.85) 0%, rgba(178,178,178,0.45) 55%, rgba(150,150,150,0) 100%),radial-gradient(ellipse 140px 140px at 0px 470px, rgba(185,185,185,0.6) 0%, rgba(150,150,150,0) 100%),radial-gradient(ellipse 120px 130px at 460px 470px, rgba(178,178,178,0.5) 0%, rgba(150,150,150,0) 100%),radial-gradient(ellipse 80px 110px at 0px 275px, rgba(168,168,168,0.45) 0%, rgba(150,150,150,0) 100%),radial-gradient(ellipse 160px 150px at 120px 80px, rgba(150,150,150,0.35) 0%, rgba(140,140,140,0) 100%),linear-gradient(to bottom,#858585 0%,#848484 50%,#8a8a8a 65%,#989898 82%,#a8a8a8 100%);"></div>
<div style="position:absolute;left:966px;top:341px;width:465px;height:1px;background:#00ffff;"></div>
<div style="position:absolute;left:1198px;top:111px;width:1px;height:459px;background:#00ffff;"></div>
<div style="position:absolute;top:113.83px;font-size:8px;line-height:8px;color:#eeeeee;white-space:nowrap;transform:scaleX(0.9334);transform-origin:0 0;left:1133.5px;font-weight:bold;">FieldPosition:(X=1,Y=-4) TargetId:7</div>
<div style="position:absolute;left:1439px;top:76px;width:461px;height:501px;box-sizing:border-box;border:1px solid #d5dfe7;background:#f0f0f0;"></div>
<div style="position:absolute;top:82.00px;font-size:18.9px;line-height:18.9px;color:#474747;white-space:nowrap;transform:scaleX(1.0107);transform-origin:0 0;left:1451px;">Wafer Map</div>
<div style="position:absolute;left:1441px;top:102px;width:320px;height:4px;background:linear-gradient(to bottom,rgba(0,0,0,0.10) 0px,rgba(0,0,0,0.05) 1.5px,rgba(0,0,0,0) 4px);-webkit-mask-image:linear-gradient(to right,rgba(0,0,0,0.2) 0%,#000 6%,#000 45%,rgba(0,0,0,0) 100%);"></div>
<div style="position:absolute;left:1441px;top:111px;width:457px;height:464px;box-sizing:border-box;border:1px solid #d5dfe7;background:#f0f0f0;"></div>
<div style="position:absolute;left:1443px;top:115px;width:22px;height:22px;background:#6495ed;"></div>
<div style="position:absolute;left:1525px;top:115px;width:22px;height:22px;background:#ffa500;"></div>
<div style="position:absolute;left:1620px;top:115px;width:22px;height:22px;background:#32cd32;"></div>
<div style="position:absolute;left:1684px;top:115px;width:22px;height:22px;background:#ff0000;"></div>
<div style="position:absolute;top:121.34px;font-size:12px;line-height:12px;color:#000;white-space:nowrap;transform:scaleX(1.0261);transform-origin:0 0;left:1468.3px;">Waiting</div>
<div style="position:absolute;top:121.34px;font-size:12px;line-height:12px;color:#000;white-space:nowrap;transform:scaleX(0.9585);transform-origin:0 0;left:1550px;">Measuring</div>
<div style="position:absolute;top:121.34px;font-size:12px;line-height:12px;color:#000;white-space:nowrap;transform:scaleX(0.8621);transform-origin:0 0;left:1645px;">Pass</div>
<div style="position:absolute;top:121.34px;font-size:12px;line-height:12px;color:#000;white-space:nowrap;transform:scaleX(0.8533);transform-origin:0 0;left:1708.9px;">Fail</div>
<div style="position:absolute;left:1448px;top:140px;width:443px;height:424px;background:#e3e3e3;"></div>
<svg style="position:absolute;left:1477.1px;top:140.9px;" width="386" height="405" viewBox="0 0 386 405"><g transform="translate(0.5,0.5)"><rect x="147.40" y="0.00" width="29.48" height="30.95" fill="#f0f8ff" stroke="#909090" stroke-width="1"/><rect x="176.88" y="0.00" width="29.48" height="30.95" fill="#f0f8ff" stroke="#909090" stroke-width="1"/><rect x="206.36" y="0.00" width="29.48" height="30.95" fill="#f0f8ff" stroke="#909090" stroke-width="1"/><rect x="88.44" y="30.95" width="29.48" height="30.95" fill="#f0f8ff" stroke="#909090" stroke-width="1"/><rect x="117.92" y="30.95" width="29.48" height="30.95" fill="#f0f8ff" stroke="#909090" stroke-width="1"/><rect x="147.40" y="30.95" width="29.48" height="30.95" fill="#f0f8ff" stroke="#909090" stroke-width="1"/><rect x="176.88" y="30.95" width="29.48" height="30.95" fill="#c00000" stroke="#909090" stroke-width="1"/><rect x="206.36" y="30.95" width="29.48" height="30.95" fill="#c00000" stroke="#909090" stroke-width="1"/><rect x="235.84" y="30.95" width="29.48" height="30.95" fill="#f0f8ff" stroke="#909090" stroke-width="1"/><rect x="265.32" y="30.95" width="29.48" height="30.95" fill="#f0f8ff" stroke="#909090" stroke-width="1"/><rect x="29.48" y="61.90" width="29.48" height="30.95" fill="#f0f8ff" stroke="#909090" stroke-width="1"/><rect x="58.96" y="61.90" width="29.48" height="30.95" fill="#f0f8ff" stroke="#909090" stroke-width="1"/><rect x="88.44" y="61.90" width="29.48" height="30.95" fill="#f0f8ff" stroke="#909090" stroke-width="1"/><rect x="117.92" y="61.90" width="29.48" height="30.95" fill="#ffd700" stroke="#909090" stroke-width="1"/><rect x="147.40" y="61.90" width="29.48" height="30.95" fill="#ffd700" stroke="#909090" stroke-width="1"/><rect x="176.88" y="61.90" width="29.48" height="30.95" fill="#ffd700" stroke="#909090" stroke-width="1"/><rect x="206.36" y="61.90" width="29.48" height="30.95" fill="#ffd700" stroke="#909090" stroke-width="1"/><rect x="235.84" y="61.90" width="29.48" height="30.95" fill="#ffd700" stroke="#909090" stroke-width="1"/><rect x="265.32" y="61.90" width="29.48" height="30.95" fill="#ffd700" stroke="#909090" stroke-width="1"/><rect x="294.80" y="61.90" width="29.48" height="30.95" fill="#f0f8ff" stroke="#909090" stroke-width="1"/><rect x="324.28" y="61.90" width="29.48" height="30.95" fill="#f0f8ff" stroke="#909090" stroke-width="1"/><rect x="29.48" y="92.85" width="29.48" height="30.95" fill="#f0f8ff" stroke="#909090" stroke-width="1"/><rect x="58.96" y="92.85" width="29.48" height="30.95" fill="#c00000" stroke="#909090" stroke-width="1"/><rect x="88.44" y="92.85" width="29.48" height="30.95" fill="#ffd700" stroke="#909090" stroke-width="1"/><rect x="117.92" y="92.85" width="29.48" height="30.95" fill="#ffd700" stroke="#909090" stroke-width="1"/><rect x="147.40" y="92.85" width="29.48" height="30.95" fill="#ffd700" stroke="#909090" stroke-width="1"/><rect x="176.88" y="92.85" width="29.48" height="30.95" fill="#ffd700" stroke="#909090" stroke-width="1"/><rect x="206.36" y="92.85" width="29.48" height="30.95" fill="#ffd700" stroke="#909090" stroke-width="1"/><rect x="235.84" y="92.85" width="29.48" height="30.95" fill="#ffd700" stroke="#909090" stroke-width="1"/><rect x="265.32" y="92.85" width="29.48" height="30.95" fill="#ffd700" stroke="#909090" stroke-width="1"/><rect x="294.80" y="92.85" width="29.48" height="30.95" fill="#ffd700" stroke="#909090" stroke-width="1"/><rect x="324.28" y="92.85" width="29.48" height="30.95" fill="#f0f8ff" stroke="#909090" stroke-width="1"/><rect x="0.00" y="123.80" width="29.48" height="30.95" fill="#f0f8ff" stroke="#909090" stroke-width="1"/><rect x="29.48" y="123.80" width="29.48" height="30.95" fill="#f0f8ff" stroke="#909090" stroke-width="1"/><rect x="58.96" y="123.80" width="29.48" height="30.95" fill="#ffd700" stroke="#909090" stroke-width="1"/><rect x="88.44" y="123.80" width="29.48" height="30.95" fill="#ffd700" stroke="#909090" stroke-width="1"/><rect x="117.92" y="123.80" width="29.48" height="30.95" fill="#ffd700" stroke="#909090" stroke-width="1"/><rect x="147.40" y="123.80" width="29.48" height="30.95" fill="#ffd700" stroke="#909090" stroke-width="1"/><rect x="176.88" y="123.80" width="29.48" height="30.95" fill="#ffd700" stroke="#909090" stroke-width="1"/><rect x="206.36" y="123.80" width="29.48" height="30.95" fill="#ffd700" stroke="#909090" stroke-width="1"/><rect x="235.84" y="123.80" width="29.48" height="30.95" fill="#ffd700" stroke="#909090" stroke-width="1"/><rect x="265.32" y="123.80" width="29.48" height="30.95" fill="#ffd700" stroke="#909090" stroke-width="1"/><rect x="294.80" y="123.80" width="29.48" height="30.95" fill="#ffd700" stroke="#909090" stroke-width="1"/><rect x="324.28" y="123.80" width="29.48" height="30.95" fill="#ffd700" stroke="#909090" stroke-width="1"/><rect x="353.76" y="123.80" width="29.48" height="30.95" fill="#f0f8ff" stroke="#909090" stroke-width="1"/><rect x="0.00" y="154.75" width="29.48" height="30.95" fill="#f0f8ff" stroke="#909090" stroke-width="1"/><rect x="29.48" y="154.75" width="29.48" height="30.95" fill="#ffd700" stroke="#909090" stroke-width="1"/><rect x="58.96" y="154.75" width="29.48" height="30.95" fill="#ffd700" stroke="#909090" stroke-width="1"/><rect x="88.44" y="154.75" width="29.48" height="30.95" fill="#ffd700" stroke="#909090" stroke-width="1"/><rect x="117.92" y="154.75" width="29.48" height="30.95" fill="#ffd700" stroke="#909090" stroke-width="1"/><rect x="147.40" y="154.75" width="29.48" height="30.95" fill="#ffd700" stroke="#909090" stroke-width="1"/><rect x="176.88" y="154.75" width="29.48" height="30.95" fill="#ffd700" stroke="#909090" stroke-width="1"/><rect x="206.36" y="154.75" width="29.48" height="30.95" fill="#c00000" stroke="#909090" stroke-width="1"/><rect x="235.84" y="154.75" width="29.48" height="30.95" fill="#c00000" stroke="#909090" stroke-width="1"/><rect x="265.32" y="154.75" width="29.48" height="30.95" fill="#c00000" stroke="#909090" stroke-width="1"/><rect x="294.80" y="154.75" width="29.48" height="30.95" fill="#c00000" stroke="#909090" stroke-width="1"/><rect x="324.28" y="154.75" width="29.48" height="30.95" fill="#c00000" stroke="#909090" stroke-width="1"/><rect x="353.76" y="154.75" width="29.48" height="30.95" fill="#f0f8ff" stroke="#909090" stroke-width="1"/><rect x="0.00" y="185.70" width="29.48" height="30.95" fill="#f0f8ff" stroke="#909090" stroke-width="1"/><rect x="29.48" y="185.70" width="29.48" height="30.95" fill="#c00000" stroke="#909090" stroke-width="1"/><rect x="58.96" y="185.70" width="29.48" height="30.95" fill="#c00000" stroke="#909090" stroke-width="1"/><rect x="88.44" y="185.70" width="29.48" height="30.95" fill="#c00000" stroke="#909090" stroke-width="1"/><rect x="117.92" y="185.70" width="29.48" height="30.95" fill="#c00000" stroke="#909090" stroke-width="1"/><rect x="147.40" y="185.70" width="29.48" height="30.95" fill="#c00000" stroke="#909090" stroke-width="1"/><rect x="176.88" y="185.70" width="29.48" height="30.95" fill="#c00000" stroke="#909090" stroke-width="1"/><rect x="206.36" y="185.70" width="29.48" height="30.95" fill="#c00000" stroke="#909090" stroke-width="1"/><rect x="235.84" y="185.70" width="29.48" height="30.95" fill="#c00000" stroke="#909090" stroke-width="1"/><rect x="265.32" y="185.70" width="29.48" height="30.95" fill="#c00000" stroke="#909090" stroke-width="1"/><rect x="294.80" y="185.70" width="29.48" height="30.95" fill="#c00000" stroke="#909090" stroke-width="1"/><rect x="324.28" y="185.70" width="29.48" height="30.95" fill="#c00000" stroke="#909090" stroke-width="1"/><rect x="353.76" y="185.70" width="29.48" height="30.95" fill="#f0f8ff" stroke="#909090" stroke-width="1"/><rect x="0.00" y="216.65" width="29.48" height="30.95" fill="#f0f8ff" stroke="#909090" stroke-width="1"/><rect x="29.48" y="216.65" width="29.48" height="30.95" fill="#c00000" stroke="#909090" stroke-width="1"/><rect x="58.96" y="216.65" width="29.48" height="30.95" fill="#c00000" stroke="#909090" stroke-width="1"/><rect x="88.44" y="216.65" width="29.48" height="30.95" fill="#c00000" stroke="#909090" stroke-width="1"/><rect x="117.92" y="216.65" width="29.48" height="30.95" fill="#c00000" stroke="#909090" stroke-width="1"/><rect x="147.40" y="216.65" width="29.48" height="30.95" fill="#c00000" stroke="#909090" stroke-width="1"/><rect x="176.88" y="216.65" width="29.48" height="30.95" fill="#c00000" stroke="#909090" stroke-width="1"/><rect x="206.36" y="216.65" width="29.48" height="30.95" fill="#c00000" stroke="#909090" stroke-width="1"/><rect x="235.84" y="216.65" width="29.48" height="30.95" fill="#c00000" stroke="#909090" stroke-width="1"/><rect x="265.32" y="216.65" width="29.48" height="30.95" fill="#c00000" stroke="#909090" stroke-width="1"/><rect x="294.80" y="216.65" width="29.48" height="30.95" fill="#c00000" stroke="#909090" stroke-width="1"/><rect x="324.28" y="216.65" width="29.48" height="30.95" fill="#c00000" stroke="#909090" stroke-width="1"/><rect x="353.76" y="216.65" width="29.48" height="30.95" fill="#f0f8ff" stroke="#909090" stroke-width="1"/><rect x="0.00" y="247.60" width="29.48" height="30.95" fill="#f0f8ff" stroke="#909090" stroke-width="1"/><rect x="29.48" y="247.60" width="29.48" height="30.95" fill="#f0f8ff" stroke="#909090" stroke-width="1"/><rect x="58.96" y="247.60" width="29.48" height="30.95" fill="#c00000" stroke="#909090" stroke-width="1"/><rect x="88.44" y="247.60" width="29.48" height="30.95" fill="#c00000" stroke="#909090" stroke-width="1"/><rect x="117.92" y="247.60" width="29.48" height="30.95" fill="#c00000" stroke="#909090" stroke-width="1"/><rect x="147.40" y="247.60" width="29.48" height="30.95" fill="#c00000" stroke="#909090" stroke-width="1"/><rect x="176.88" y="247.60" width="29.48" height="30.95" fill="#c00000" stroke="#909090" stroke-width="1"/><rect x="206.36" y="247.60" width="29.48" height="30.95" fill="#c00000" stroke="#909090" stroke-width="1"/><rect x="235.84" y="247.60" width="29.48" height="30.95" fill="#c00000" stroke="#909090" stroke-width="1"/><rect x="265.32" y="247.60" width="29.48" height="30.95" fill="#c00000" stroke="#909090" stroke-width="1"/><rect x="294.80" y="247.60" width="29.48" height="30.95" fill="#c00000" stroke="#909090" stroke-width="1"/><rect x="324.28" y="247.60" width="29.48" height="30.95" fill="#c00000" stroke="#909090" stroke-width="1"/><rect x="353.76" y="247.60" width="29.48" height="30.95" fill="#f0f8ff" stroke="#909090" stroke-width="1"/><rect x="29.48" y="278.55" width="29.48" height="30.95" fill="#f0f8ff" stroke="#909090" stroke-width="1"/><rect x="58.96" y="278.55" width="29.48" height="30.95" fill="#c00000" stroke="#909090" stroke-width="1"/><rect x="88.44" y="278.55" width="29.48" height="30.95" fill="#c00000" stroke="#909090" stroke-width="1"/><rect x="117.92" y="278.55" width="29.48" height="30.95" fill="#c00000" stroke="#909090" stroke-width="1"/><rect x="147.40" y="278.55" width="29.48" height="30.95" fill="#c00000" stroke="#909090" stroke-width="1"/><rect x="176.88" y="278.55" width="29.48" height="30.95" fill="#c00000" stroke="#909090" stroke-width="1"/><rect x="206.36" y="278.55" width="29.48" height="30.95" fill="#c00000" stroke="#909090" stroke-width="1"/><rect x="235.84" y="278.55" width="29.48" height="30.95" fill="#c00000" stroke="#909090" stroke-width="1"/><rect x="265.32" y="278.55" width="29.48" height="30.95" fill="#c00000" stroke="#909090" stroke-width="1"/><rect x="294.80" y="278.55" width="29.48" height="30.95" fill="#c00000" stroke="#909090" stroke-width="1"/><rect x="324.28" y="278.55" width="29.48" height="30.95" fill="#f0f8ff" stroke="#909090" stroke-width="1"/><rect x="29.48" y="309.50" width="29.48" height="30.95" fill="#f0f8ff" stroke="#909090" stroke-width="1"/><rect x="58.96" y="309.50" width="29.48" height="30.95" fill="#f0f8ff" stroke="#909090" stroke-width="1"/><rect x="88.44" y="309.50" width="29.48" height="30.95" fill="#c00000" stroke="#909090" stroke-width="1"/><rect x="117.92" y="309.50" width="29.48" height="30.95" fill="#c00000" stroke="#909090" stroke-width="1"/><rect x="147.40" y="309.50" width="29.48" height="30.95" fill="#c00000" stroke="#909090" stroke-width="1"/><rect x="176.88" y="309.50" width="29.48" height="30.95" fill="#c00000" stroke="#909090" stroke-width="1"/><rect x="206.36" y="309.50" width="29.48" height="30.95" fill="#c00000" stroke="#909090" stroke-width="1"/><rect x="235.84" y="309.50" width="29.48" height="30.95" fill="#c00000" stroke="#909090" stroke-width="1"/><rect x="265.32" y="309.50" width="29.48" height="30.95" fill="#c00000" stroke="#909090" stroke-width="1"/><rect x="294.80" y="309.50" width="29.48" height="30.95" fill="#f0f8ff" stroke="#909090" stroke-width="1"/><rect x="324.28" y="309.50" width="29.48" height="30.95" fill="#f0f8ff" stroke="#909090" stroke-width="1"/><rect x="88.44" y="340.45" width="29.48" height="30.95" fill="#f0f8ff" stroke="#909090" stroke-width="1"/><rect x="117.92" y="340.45" width="29.48" height="30.95" fill="#c00000" stroke="#909090" stroke-width="1"/><rect x="147.40" y="340.45" width="29.48" height="30.95" fill="#c00000" stroke="#909090" stroke-width="1"/><rect x="176.88" y="340.45" width="29.48" height="30.95" fill="#c00000" stroke="#909090" stroke-width="1"/><rect x="206.36" y="340.45" width="29.48" height="30.95" fill="#c00000" stroke="#909090" stroke-width="1"/><rect x="235.84" y="340.45" width="29.48" height="30.95" fill="#c00000" stroke="#909090" stroke-width="1"/><rect x="265.32" y="340.45" width="29.48" height="30.95" fill="#f0f8ff" stroke="#909090" stroke-width="1"/><rect x="147.40" y="371.40" width="29.48" height="30.95" fill="#f0f8ff" stroke="#909090" stroke-width="1"/><rect x="176.88" y="371.40" width="29.48" height="30.95" fill="#f0f8ff" stroke="#909090" stroke-width="1"/><rect x="206.36" y="371.40" width="29.48" height="30.95" fill="#f0f8ff" stroke="#909090" stroke-width="1"/><circle cx="191.70" cy="200.60" r="172.7" fill="none" stroke="#5a5a5a" stroke-width="1"/></g></svg>
<div style="position:absolute;left:1465px;top:315px;width:71px;height:18px;background:#c2cfdb;"></div>
<div style="position:absolute;top:319.00px;font-size:13px;line-height:13px;color:#000;white-space:nowrap;left:1468.4px;font-family:'Liberation Mono',monospace;">x:-6 y:1</div>
<div style="position:absolute;left:964px;top:577px;width:936px;height:343px;box-sizing:border-box;border:1px solid #d5dfe7;background:#f0f0f0;"></div>
<div style="position:absolute;top:583.51px;font-size:18.3px;line-height:18.3px;color:#474747;white-space:nowrap;transform:scaleX(1.0019);transform-origin:0 0;left:976.1px;">Job History</div>
<div style="position:absolute;left:966px;top:603px;width:620px;height:4px;background:linear-gradient(to bottom,rgba(0,0,0,0.10) 0px,rgba(0,0,0,0.05) 1.5px,rgba(0,0,0,0) 4px);-webkit-mask-image:linear-gradient(to right,rgba(0,0,0,0.2) 0%,#000 6%,#000 45%,rgba(0,0,0,0) 100%);"></div>
<svg style="position:absolute;left:1808px;top:586px;" width="24" height="23" viewBox="0 0 24 23"><defs><radialGradient id="gsr" cx="0.35" cy="0.3" r="0.75"><stop offset="0" stop-color="#ffffff"/><stop offset="0.35" stop-color="#a8c8f0"/><stop offset="1" stop-color="#4a7cc8"/></radialGradient></defs><path d="M12,1.5 H19 Q21.5,1.5 21.5,4 V19 Q21.5,21.5 19,21.5 H4 Q1.5,21.5 1.5,19 V12" fill="none" stroke="#5a5a5a" stroke-width="1.1"/><path d="M14,14 L20,20" stroke="#e8eef8" stroke-width="4.5" stroke-linecap="round"/><path d="M14,14 L19.5,19.5" stroke="#5872b8" stroke-width="2.6"/><path d="M19.5,19.5 L21.5,21.5" stroke="#f0a030" stroke-width="2.2"/><circle cx="9" cy="9" r="8.6" fill="#f2f6fc" stroke="#8aa0c8" stroke-width="0.6"/><circle cx="9" cy="9" r="7" fill="url(#gsr)" stroke="#3f64b0" stroke-width="0.8"/></svg>
<div style="position:absolute;top:593.99px;font-size:12.3px;line-height:12.3px;color:#000;white-space:nowrap;transform:scaleX(0.9976);transform-origin:0 0;left:1842.4px;">Count:20</div>
<div style="position:absolute;left:966px;top:612px;width:932px;height:306px;box-sizing:border-box;border:1px solid #d4d4d4;background:#fff;"></div>
<div style="position:absolute;left:967px;top:613px;width:929px;height:26px;background:linear-gradient(to bottom,#ffffff 0px,#ffffff 11px,#f1f2f4 12px,#eceef1 26px);"></div>
<div style="position:absolute;left:967px;top:639px;width:929px;height:1px;background:#d8d8d8;"></div>
<div style="position:absolute;left:1072px;top:613px;width:1px;height:26px;background:#dcdcdc;"></div>
<div style="position:absolute;left:1159px;top:613px;width:1px;height:26px;background:#dcdcdc;"></div>
<div style="position:absolute;left:1246px;top:613px;width:1px;height:26px;background:#dcdcdc;"></div>
<div style="position:absolute;left:1343px;top:613px;width:1px;height:26px;background:#dcdcdc;"></div>
<div style="position:absolute;left:1450px;top:613px;width:1px;height:26px;background:#dcdcdc;"></div>
<div style="position:absolute;left:1575px;top:613px;width:1px;height:26px;background:#dcdcdc;"></div>
<div style="position:absolute;left:1651px;top:613px;width:1px;height:26px;background:#dcdcdc;"></div>
<div style="position:absolute;left:1727px;top:613px;width:1px;height:26px;background:#dcdcdc;"></div>
<div style="position:absolute;left:1803px;top:613px;width:1px;height:26px;background:#dcdcdc;"></div>
<div style="position:absolute;left:1879px;top:613px;width:1px;height:26px;background:#dcdcdc;"></div>
<div style="position:absolute;top:620.42px;font-size:12.5px;line-height:12.5px;color:#000;white-space:nowrap;left:971.3px;">Lot ID</div>
<div style="position:absolute;top:620.42px;font-size:12.5px;line-height:12.5px;color:#000;white-space:nowrap;left:1077.3px;">Wafer ID</div>
<div style="position:absolute;top:620.42px;font-size:12.5px;line-height:12.5px;color:#000;white-space:nowrap;left:1164.3px;">Status</div>
<div style="position:absolute;top:620.42px;font-size:12.5px;line-height:12.5px;color:#000;white-space:nowrap;left:1251.3px;">Description</div>
<div style="position:absolute;top:620.42px;font-size:12.5px;line-height:12.5px;color:#000;white-space:nowrap;left:1348.3px;">Recipe</div>
<div style="position:absolute;top:620.42px;font-size:12.5px;line-height:12.5px;color:#000;white-space:nowrap;left:1455.3px;">Start Time</div>
<div style="position:absolute;top:620.42px;font-size:12.5px;line-height:12.5px;color:#000;white-space:nowrap;left:1580.3px;">Max</div>
<div style="position:absolute;top:620.42px;font-size:12.5px;line-height:12.5px;color:#000;white-space:nowrap;left:1656.3px;">Min</div>
<div style="position:absolute;top:620.42px;font-size:12.5px;line-height:12.5px;color:#000;white-space:nowrap;left:1732.3px;">Mean</div>
<div style="position:absolute;top:620.42px;font-size:12.5px;line-height:12.5px;color:#000;white-space:nowrap;left:1808.3px;">3Sigma</div>
<svg style="position:absolute;left:1561px;top:623px;" width="9" height="5" viewBox="0 0 9 5"><polygon points="0,0 8,0 4,4" fill="#222"/></svg>
<div style="position:absolute;left:0;top:0;width:1902px;height:924px;clip-path:inset(640px 22px 7px 967px);">
<div style="position:absolute;left:967px;top:640px;width:913px;height:32px;background:#a9a9a9;"></div>
<div style="position:absolute;left:967px;top:672px;width:913px;height:1px;background:#d8d8d8;"></div>
<div style="position:absolute;left:1072px;top:640px;width:1px;height:32px;background:#d8d8d8;"></div>
<div style="position:absolute;left:1159px;top:640px;width:1px;height:32px;background:#d8d8d8;"></div>
<div style="position:absolute;left:1246px;top:640px;width:1px;height:32px;background:#d8d8d8;"></div>
<div style="position:absolute;left:1343px;top:640px;width:1px;height:32px;background:#d8d8d8;"></div>
<div style="position:absolute;left:1450px;top:640px;width:1px;height:32px;background:#d8d8d8;"></div>
<div style="position:absolute;left:1575px;top:640px;width:1px;height:32px;background:#d8d8d8;"></div>
<div style="position:absolute;left:1651px;top:640px;width:1px;height:32px;background:#d8d8d8;"></div>
<div style="position:absolute;left:1727px;top:640px;width:1px;height:32px;background:#d8d8d8;"></div>
<div style="position:absolute;left:1803px;top:640px;width:1px;height:32px;background:#d8d8d8;"></div>
<div style="position:absolute;left:1879px;top:640px;width:1px;height:32px;background:#d8d8d8;"></div>
<div style="position:absolute;top:651.42px;font-size:12.5px;line-height:12.5px;color:#000;white-space:nowrap;transform:scaleX(0.9243);transform-origin:0 0;left:971.4px;">PFP04233</div>
<svg style="position:absolute;left:1076px;top:650px;" width="13" height="13" viewBox="0 0 13 13"><defs><radialGradient id="gfi0" cx="0.4" cy="0.35" r="0.7"><stop offset="0" stop-color="#f05050"/><stop offset="1" stop-color="#c01010"/></radialGradient></defs><circle cx="6.5" cy="6.5" r="6" fill="url(#gfi0)"/><path d="M4,4 L9,9 M9,4 L4,9" stroke="#fff" stroke-width="1.8" stroke-linecap="round"/></svg>
<div style="position:absolute;top:651.42px;font-size:12.5px;line-height:12.5px;color:#000;white-space:nowrap;transform:scaleX(0.9940);transform-origin:0 0;left:1093px;">LP2Wafe...</div>
<div style="position:absolute;top:651.42px;font-size:12.5px;line-height:12.5px;color:#000;white-space:nowrap;transform:scaleX(0.8812);transform-origin:0 0;left:1164px;">Failed</div>
<div style="position:absolute;top:651.42px;font-size:12.5px;line-height:12.5px;color:#000;white-space:nowrap;transform:scaleX(0.9250);transform-origin:0 0;left:1255.3px;">Failed Mark C...</div>
<div style="position:absolute;top:651.42px;font-size:12.5px;line-height:12.5px;color:#000;white-space:nowrap;transform:scaleX(0.9861);transform-origin:0 0;left:1348.1px;">Product\TQV2....</div>
<div style="position:absolute;top:650.50px;font-size:13px;line-height:13px;color:#000;white-space:nowrap;transform:scaleX(1.0353);transform-origin:0 0;left:1454.1px;">2025/11/17/21:38...</div>
<div style="position:absolute;top:643.33px;font-size:12.6px;line-height:12.6px;color:#000;white-space:nowrap;left:1580.5px;">X:1150.66</div>
<div style="position:absolute;top:657.33px;font-size:12.6px;line-height:12.6px;color:#000;white-space:nowrap;left:1581.4px;">Y:2242.38</div>
<div style="position:absolute;top:643.33px;font-size:12.6px;line-height:12.6px;color:#000;white-space:nowrap;left:1656.5px;">X:-2855.27</div>
<div style="position:absolute;top:657.33px;font-size:12.6px;line-height:12.6px;color:#000;white-space:nowrap;left:1657.8px;">Y:-1324.02</div>
<div style="position:absolute;top:643.33px;font-size:12.6px;line-height:12.6px;color:#000;white-space:nowrap;left:1732.5px;">X:-1044.45</div>
<div style="position:absolute;top:657.33px;font-size:12.6px;line-height:12.6px;color:#000;white-space:nowrap;left:1733.8px;">Y:390.01</div>
<div style="position:absolute;top:643.33px;font-size:12.6px;line-height:12.6px;color:#000;white-space:nowrap;left:1808.5px;">X:4097.60</div>
<div style="position:absolute;top:657.33px;font-size:12.6px;line-height:12.6px;color:#000;white-space:nowrap;left:1809.4px;">Y:3593.32</div>
<div style="position:absolute;left:967px;top:673px;width:913px;height:32px;background:#f0f8ff;"></div>
<div style="position:absolute;left:967px;top:705px;width:913px;height:1px;background:#d8d8d8;"></div>
<div style="position:absolute;left:1072px;top:673px;width:1px;height:32px;background:#d8d8d8;"></div>
<div style="position:absolute;left:1159px;top:673px;width:1px;height:32px;background:#d8d8d8;"></div>
<div style="position:absolute;left:1246px;top:673px;width:1px;height:32px;background:#d8d8d8;"></div>
<div style="position:absolute;left:1343px;top:673px;width:1px;height:32px;background:#d8d8d8;"></div>
<div style="position:absolute;left:1450px;top:673px;width:1px;height:32px;background:#d8d8d8;"></div>
<div style="position:absolute;left:1575px;top:673px;width:1px;height:32px;background:#d8d8d8;"></div>
<div style="position:absolute;left:1651px;top:673px;width:1px;height:32px;background:#d8d8d8;"></div>
<div style="position:absolute;left:1727px;top:673px;width:1px;height:32px;background:#d8d8d8;"></div>
<div style="position:absolute;left:1803px;top:673px;width:1px;height:32px;background:#d8d8d8;"></div>
<div style="position:absolute;left:1879px;top:673px;width:1px;height:32px;background:#d8d8d8;"></div>
<div style="position:absolute;top:684.42px;font-size:12.5px;line-height:12.5px;color:#000;white-space:nowrap;transform:scaleX(0.9243);transform-origin:0 0;left:971.4px;">PFP18387</div>
<div style="position:absolute;top:684.42px;font-size:12.5px;line-height:12.5px;color:#000;white-space:nowrap;transform:scaleX(0.9650);transform-origin:0 0;left:1077.3px;">LP1Wafer17</div>
<div style="position:absolute;top:684.42px;font-size:12.5px;line-height:12.5px;color:#000;white-space:nowrap;transform:scaleX(0.8492);transform-origin:0 0;left:1164px;">Pass</div>
<div style="position:absolute;top:684.42px;font-size:12.5px;line-height:12.5px;color:#000;white-space:nowrap;transform:scaleX(1.0615);transform-origin:0 0;left:1251.5px;">(296/288)</div>
<div style="position:absolute;top:684.42px;font-size:12.5px;line-height:12.5px;color:#000;white-space:nowrap;transform:scaleX(1.0245);transform-origin:0 0;left:1348.1px;">Product\WSH\...</div>
<div style="position:absolute;top:683.50px;font-size:13px;line-height:13px;color:#000;white-space:nowrap;transform:scaleX(1.0353);transform-origin:0 0;left:1454.1px;">2025/11/17/21:16...</div>
<div style="position:absolute;top:676.33px;font-size:12.6px;line-height:12.6px;color:#000;white-space:nowrap;left:1580.5px;">X:1014.23</div>
<div style="position:absolute;top:690.33px;font-size:12.6px;line-height:12.6px;color:#000;white-space:nowrap;left:1581.4px;">Y:897.65</div>
<div style="position:absolute;top:676.33px;font-size:12.6px;line-height:12.6px;color:#000;white-space:nowrap;left:1656.5px;">X:-752.02</div>
<div style="position:absolute;top:690.33px;font-size:12.6px;line-height:12.6px;color:#000;white-space:nowrap;left:1657.8px;">Y:-1271.98</div>
<div style="position:absolute;top:676.33px;font-size:12.6px;line-height:12.6px;color:#000;white-space:nowrap;left:1732.5px;">X:291.43</div>
<div style="position:absolute;top:690.33px;font-size:12.6px;line-height:12.6px;color:#000;white-space:nowrap;left:1733.4px;">Y:-252.42</div>
<div style="position:absolute;top:676.33px;font-size:12.6px;line-height:12.6px;color:#000;white-space:nowrap;left:1808.5px;">X:1014.19</div>
<div style="position:absolute;top:690.33px;font-size:12.6px;line-height:12.6px;color:#000;white-space:nowrap;left:1809.4px;">Y:909.03</div>
<div style="position:absolute;left:967px;top:706px;width:913px;height:32px;background:#ffffff;"></div>
<div style="position:absolute;left:967px;top:738px;width:913px;height:1px;background:#d8d8d8;"></div>
<div style="position:absolute;left:1072px;top:706px;width:1px;height:32px;background:#d8d8d8;"></div>
<div style="position:absolute;left:1159px;top:706px;width:1px;height:32px;background:#d8d8d8;"></div>
<div style="position:absolute;left:1246px;top:706px;width:1px;height:32px;background:#d8d8d8;"></div>
<div style="position:absolute;left:1343px;top:706px;width:1px;height:32px;background:#d8d8d8;"></div>
<div style="position:absolute;left:1450px;top:706px;width:1px;height:32px;background:#d8d8d8;"></div>
<div style="position:absolute;left:1575px;top:706px;width:1px;height:32px;background:#d8d8d8;"></div>
<div style="position:absolute;left:1651px;top:706px;width:1px;height:32px;background:#d8d8d8;"></div>
<div style="position:absolute;left:1727px;top:706px;width:1px;height:32px;background:#d8d8d8;"></div>
<div style="position:absolute;left:1803px;top:706px;width:1px;height:32px;background:#d8d8d8;"></div>
<div style="position:absolute;left:1879px;top:706px;width:1px;height:32px;background:#d8d8d8;"></div>
<div style="position:absolute;top:717.42px;font-size:12.5px;line-height:12.5px;color:#000;white-space:nowrap;transform:scaleX(0.9243);transform-origin:0 0;left:971.4px;">PFP18387</div>
<div style="position:absolute;top:717.42px;font-size:12.5px;line-height:12.5px;color:#000;white-space:nowrap;transform:scaleX(0.9650);transform-origin:0 0;left:1077.3px;">LP1Wafer16</div>
<div style="position:absolute;top:717.42px;font-size:12.5px;line-height:12.5px;color:#000;white-space:nowrap;transform:scaleX(0.8492);transform-origin:0 0;left:1164px;">Pass</div>
<div style="position:absolute;top:717.42px;font-size:12.5px;line-height:12.5px;color:#000;white-space:nowrap;transform:scaleX(1.0615);transform-origin:0 0;left:1251.5px;">(296/288)</div>
<div style="position:absolute;top:717.42px;font-size:12.5px;line-height:12.5px;color:#000;white-space:nowrap;transform:scaleX(1.0245);transform-origin:0 0;left:1348.1px;">Product\WSH\...</div>
<div style="position:absolute;top:716.50px;font-size:13px;line-height:13px;color:#000;white-space:nowrap;transform:scaleX(1.0353);transform-origin:0 0;left:1454.1px;">2025/11/17/21:07...</div>
<div style="position:absolute;top:709.33px;font-size:12.6px;line-height:12.6px;color:#000;white-space:nowrap;left:1580.5px;">X:835.63</div>
<div style="position:absolute;top:723.33px;font-size:12.6px;line-height:12.6px;color:#000;white-space:nowrap;left:1581.4px;">Y:1183.70</div>
<div style="position:absolute;top:709.33px;font-size:12.6px;line-height:12.6px;color:#000;white-space:nowrap;left:1656.5px;">X:-1161.84</div>
<div style="position:absolute;top:723.33px;font-size:12.6px;line-height:12.6px;color:#000;white-space:nowrap;left:1657.8px;">Y:-1039.17</div>
<div style="position:absolute;top:709.33px;font-size:12.6px;line-height:12.6px;color:#000;white-space:nowrap;left:1732.5px;">X:219.99</div>
<div style="position:absolute;top:723.33px;font-size:12.6px;line-height:12.6px;color:#000;white-space:nowrap;left:1733.4px;">Y:-226.51</div>
<div style="position:absolute;top:709.33px;font-size:12.6px;line-height:12.6px;color:#000;white-space:nowrap;left:1808.5px;">X:1205.08</div>
<div style="position:absolute;top:723.33px;font-size:12.6px;line-height:12.6px;color:#000;white-space:nowrap;left:1809.4px;">Y:820.98</div>
<div style="position:absolute;left:967px;top:739px;width:913px;height:32px;background:#f0f8ff;"></div>
<div style="position:absolute;left:967px;top:771px;width:913px;height:1px;background:#d8d8d8;"></div>
<div style="position:absolute;left:1072px;top:739px;width:1px;height:32px;background:#d8d8d8;"></div>
<div style="position:absolute;left:1159px;top:739px;width:1px;height:32px;background:#d8d8d8;"></div>
<div style="position:absolute;left:1246px;top:739px;width:1px;height:32px;background:#d8d8d8;"></div>
<div style="position:absolute;left:1343px;top:739px;width:1px;height:32px;background:#d8d8d8;"></div>
<div style="position:absolute;left:1450px;top:739px;width:1px;height:32px;background:#d8d8d8;"></div>
<div style="position:absolute;left:1575px;top:739px;width:1px;height:32px;background:#d8d8d8;"></div>
<div style="position:absolute;left:1651px;top:739px;width:1px;height:32px;background:#d8d8d8;"></div>
<div style="position:absolute;left:1727px;top:739px;width:1px;height:32px;background:#d8d8d8;"></div>
<div style="position:absolute;left:1803px;top:739px;width:1px;height:32px;background:#d8d8d8;"></div>
<div style="position:absolute;left:1879px;top:739px;width:1px;height:32px;background:#d8d8d8;"></div>
<div style="position:absolute;top:750.42px;font-size:12.5px;line-height:12.5px;color:#000;white-space:nowrap;transform:scaleX(0.9243);transform-origin:0 0;left:971.4px;">PFP04233</div>
<svg style="position:absolute;left:1076px;top:749px;" width="13" height="13" viewBox="0 0 13 13"><defs><radialGradient id="gfi3" cx="0.4" cy="0.35" r="0.7"><stop offset="0" stop-color="#f05050"/><stop offset="1" stop-color="#c01010"/></radialGradient></defs><circle cx="6.5" cy="6.5" r="6" fill="url(#gfi3)"/><path d="M4,4 L9,9 M9,4 L4,9" stroke="#fff" stroke-width="1.8" stroke-linecap="round"/></svg>
<div style="position:absolute;top:750.42px;font-size:12.5px;line-height:12.5px;color:#000;white-space:nowrap;transform:scaleX(0.9940);transform-origin:0 0;left:1093px;">LP1Wafe...</div>
<div style="position:absolute;top:750.42px;font-size:12.5px;line-height:12.5px;color:#000;white-space:nowrap;transform:scaleX(0.8812);transform-origin:0 0;left:1164px;">Failed</div>
<div style="position:absolute;top:750.42px;font-size:12.5px;line-height:12.5px;color:#000;white-space:nowrap;transform:scaleX(0.9250);transform-origin:0 0;left:1255.3px;">Failed Mark C...</div>
<div style="position:absolute;top:750.42px;font-size:12.5px;line-height:12.5px;color:#000;white-space:nowrap;transform:scaleX(0.9861);transform-origin:0 0;left:1348.1px;">Product\TQV2....</div>
<div style="position:absolute;top:749.50px;font-size:13px;line-height:13px;color:#000;white-space:nowrap;transform:scaleX(1.0353);transform-origin:0 0;left:1454.1px;">2025/11/17/17:22...</div>
<div style="position:absolute;top:742.33px;font-size:12.6px;line-height:12.6px;color:#000;white-space:nowrap;left:1580.5px;">X:2438.03</div>
<div style="position:absolute;top:756.33px;font-size:12.6px;line-height:12.6px;color:#000;white-space:nowrap;left:1581.4px;">Y:-50.41</div>
<div style="position:absolute;top:742.33px;font-size:12.6px;line-height:12.6px;color:#000;white-space:nowrap;left:1656.5px;">X:-1254.05</div>
<div style="position:absolute;top:756.33px;font-size:12.6px;line-height:12.6px;color:#000;white-space:nowrap;left:1657.8px;">Y:-3529.22</div>
<div style="position:absolute;top:742.33px;font-size:12.6px;line-height:12.6px;color:#000;white-space:nowrap;left:1732.5px;">X:529.57</div>
<div style="position:absolute;top:756.33px;font-size:12.6px;line-height:12.6px;color:#000;white-space:nowrap;left:1733.4px;">Y:-2162.95</div>
<div style="position:absolute;top:742.33px;font-size:12.6px;line-height:12.6px;color:#000;white-space:nowrap;left:1808.5px;">X:2808.57</div>
<div style="position:absolute;top:756.33px;font-size:12.6px;line-height:12.6px;color:#000;white-space:nowrap;left:1809.4px;">Y:2327.84</div>
<div style="position:absolute;left:967px;top:772px;width:913px;height:32px;background:#ffffff;"></div>
<div style="position:absolute;left:967px;top:804px;width:913px;height:1px;background:#d8d8d8;"></div>
<div style="position:absolute;left:1072px;top:772px;width:1px;height:32px;background:#d8d8d8;"></div>
<div style="position:absolute;left:1159px;top:772px;width:1px;height:32px;background:#d8d8d8;"></div>
<div style="position:absolute;left:1246px;top:772px;width:1px;height:32px;background:#d8d8d8;"></div>
<div style="position:absolute;left:1343px;top:772px;width:1px;height:32px;background:#d8d8d8;"></div>
<div style="position:absolute;left:1450px;top:772px;width:1px;height:32px;background:#d8d8d8;"></div>
<div style="position:absolute;left:1575px;top:772px;width:1px;height:32px;background:#d8d8d8;"></div>
<div style="position:absolute;left:1651px;top:772px;width:1px;height:32px;background:#d8d8d8;"></div>
<div style="position:absolute;left:1727px;top:772px;width:1px;height:32px;background:#d8d8d8;"></div>
<div style="position:absolute;left:1803px;top:772px;width:1px;height:32px;background:#d8d8d8;"></div>
<div style="position:absolute;left:1879px;top:772px;width:1px;height:32px;background:#d8d8d8;"></div>
<div style="position:absolute;top:783.42px;font-size:12.5px;line-height:12.5px;color:#000;white-space:nowrap;transform:scaleX(0.9243);transform-origin:0 0;left:971.4px;">PFP04233</div>
<div style="position:absolute;top:783.42px;font-size:12.5px;line-height:12.5px;color:#000;white-space:nowrap;transform:scaleX(0.9650);transform-origin:0 0;left:1077.3px;">LP1Wafer02</div>
<div style="position:absolute;top:783.42px;font-size:12.5px;line-height:12.5px;color:#000;white-space:nowrap;transform:scaleX(0.8492);transform-origin:0 0;left:1164px;">Pass</div>
<div style="position:absolute;top:783.42px;font-size:12.5px;line-height:12.5px;color:#000;white-space:nowrap;transform:scaleX(1.0615);transform-origin:0 0;left:1251.5px;">(370/301)</div>
<div style="position:absolute;top:783.42px;font-size:12.5px;line-height:12.5px;color:#000;white-space:nowrap;transform:scaleX(0.9861);transform-origin:0 0;left:1348.1px;">Product\TQV2....</div>
<div style="position:absolute;top:782.50px;font-size:13px;line-height:13px;color:#000;white-space:nowrap;transform:scaleX(1.0353);transform-origin:0 0;left:1454.1px;">2025/11/17/12:03...</div>
<div style="position:absolute;top:775.33px;font-size:12.6px;line-height:12.6px;color:#000;white-space:nowrap;left:1580.5px;">X:5844.38</div>
<div style="position:absolute;top:789.33px;font-size:12.6px;line-height:12.6px;color:#000;white-space:nowrap;left:1581.4px;">Y:4094.57</div>
<div style="position:absolute;top:775.33px;font-size:12.6px;line-height:12.6px;color:#000;white-space:nowrap;left:1656.5px;">X:-2965.31</div>
<div style="position:absolute;top:789.33px;font-size:12.6px;line-height:12.6px;color:#000;white-space:nowrap;left:1657.8px;">Y:-3590.43</div>
<div style="position:absolute;top:775.33px;font-size:12.6px;line-height:12.6px;color:#000;white-space:nowrap;left:1732.5px;">X:339.74</div>
<div style="position:absolute;top:789.33px;font-size:12.6px;line-height:12.6px;color:#000;white-space:nowrap;left:1733.4px;">Y:529.56</div>
<div style="position:absolute;top:775.33px;font-size:12.6px;line-height:12.6px;color:#000;white-space:nowrap;left:1808.5px;">X:4470.67</div>
<div style="position:absolute;top:789.33px;font-size:12.6px;line-height:12.6px;color:#000;white-space:nowrap;left:1809.4px;">Y:4321.19</div>
<div style="position:absolute;left:967px;top:805px;width:913px;height:32px;background:#f0f8ff;"></div>
<div style="position:absolute;left:967px;top:837px;width:913px;height:1px;background:#d8d8d8;"></div>
<div style="position:absolute;left:1072px;top:805px;width:1px;height:32px;background:#d8d8d8;"></div>
<div style="position:absolute;left:1159px;top:805px;width:1px;height:32px;background:#d8d8d8;"></div>
<div style="position:absolute;left:1246px;top:805px;width:1px;height:32px;background:#d8d8d8;"></div>
<div style="position:absolute;left:1343px;top:805px;width:1px;height:32px;background:#d8d8d8;"></div>
<div style="position:absolute;left:1450px;top:805px;width:1px;height:32px;background:#d8d8d8;"></div>
<div style="position:absolute;left:1575px;top:805px;width:1px;height:32px;background:#d8d8d8;"></div>
<div style="position:absolute;left:1651px;top:805px;width:1px;height:32px;background:#d8d8d8;"></div>
<div style="position:absolute;left:1727px;top:805px;width:1px;height:32px;background:#d8d8d8;"></div>
<div style="position:absolute;left:1803px;top:805px;width:1px;height:32px;background:#d8d8d8;"></div>
<div style="position:absolute;left:1879px;top:805px;width:1px;height:32px;background:#d8d8d8;"></div>
<div style="position:absolute;top:816.42px;font-size:12.5px;line-height:12.5px;color:#000;white-space:nowrap;transform:scaleX(0.9243);transform-origin:0 0;left:971.4px;">PFP04233</div>
<svg style="position:absolute;left:1076px;top:815px;" width="13" height="13" viewBox="0 0 13 13"><defs><radialGradient id="gfi5" cx="0.4" cy="0.35" r="0.7"><stop offset="0" stop-color="#f05050"/><stop offset="1" stop-color="#c01010"/></radialGradient></defs><circle cx="6.5" cy="6.5" r="6" fill="url(#gfi5)"/><path d="M4,4 L9,9 M9,4 L4,9" stroke="#fff" stroke-width="1.8" stroke-linecap="round"/></svg>
<div style="position:absolute;top:816.42px;font-size:12.5px;line-height:12.5px;color:#000;white-space:nowrap;transform:scaleX(0.9940);transform-origin:0 0;left:1093px;">LP1Wafe...</div>
<div style="position:absolute;top:816.42px;font-size:12.5px;line-height:12.5px;color:#000;white-space:nowrap;transform:scaleX(0.8812);transform-origin:0 0;left:1164px;">Failed</div>
<div style="position:absolute;top:816.42px;font-size:12.5px;line-height:12.5px;color:#000;white-space:nowrap;transform:scaleX(0.9250);transform-origin:0 0;left:1255.3px;">Failed Mark C...</div>
<div style="position:absolute;top:816.42px;font-size:12.5px;line-height:12.5px;color:#000;white-space:nowrap;transform:scaleX(0.9861);transform-origin:0 0;left:1348.1px;">Product\TQV2....</div>
<div style="position:absolute;top:815.50px;font-size:13px;line-height:13px;color:#000;white-space:nowrap;transform:scaleX(1.0444);transform-origin:0 0;left:1454.1px;">2025/11/17/11:48...</div>
<div style="position:absolute;top:808.33px;font-size:12.6px;line-height:12.6px;color:#000;white-space:nowrap;left:1580.5px;">X:5587.04</div>
<div style="position:absolute;top:822.33px;font-size:12.6px;line-height:12.6px;color:#000;white-space:nowrap;left:1581.4px;">Y:6109.29</div>
<div style="position:absolute;top:808.33px;font-size:12.6px;line-height:12.6px;color:#000;white-space:nowrap;left:1656.5px;">X:-3372.52</div>
<div style="position:absolute;top:822.33px;font-size:12.6px;line-height:12.6px;color:#000;white-space:nowrap;left:1657.8px;">Y:-2449.60</div>
<div style="position:absolute;top:808.33px;font-size:12.6px;line-height:12.6px;color:#000;white-space:nowrap;left:1732.5px;">X:672.21</div>
<div style="position:absolute;top:822.33px;font-size:12.6px;line-height:12.6px;color:#000;white-space:nowrap;left:1733.4px;">Y:1142.27</div>
<div style="position:absolute;top:808.33px;font-size:12.6px;line-height:12.6px;color:#000;white-space:nowrap;left:1808.5px;">X:6308.08</div>
<div style="position:absolute;top:822.33px;font-size:12.6px;line-height:12.6px;color:#000;white-space:nowrap;left:1809.4px;">Y:5480.67</div>
<div style="position:absolute;left:967px;top:838px;width:913px;height:32px;background:#ffffff;"></div>
<div style="position:absolute;left:967px;top:870px;width:913px;height:1px;background:#d8d8d8;"></div>
<div style="position:absolute;left:1072px;top:838px;width:1px;height:32px;background:#d8d8d8;"></div>
<div style="position:absolute;left:1159px;top:838px;width:1px;height:32px;background:#d8d8d8;"></div>
<div style="position:absolute;left:1246px;top:838px;width:1px;height:32px;background:#d8d8d8;"></div>
<div style="position:absolute;left:1343px;top:838px;width:1px;height:32px;background:#d8d8d8;"></div>
<div style="position:absolute;left:1450px;top:838px;width:1px;height:32px;background:#d8d8d8;"></div>
<div style="position:absolute;left:1575px;top:838px;width:1px;height:32px;background:#d8d8d8;"></div>
<div style="position:absolute;left:1651px;top:838px;width:1px;height:32px;background:#d8d8d8;"></div>
<div style="position:absolute;left:1727px;top:838px;width:1px;height:32px;background:#d8d8d8;"></div>
<div style="position:absolute;left:1803px;top:838px;width:1px;height:32px;background:#d8d8d8;"></div>
<div style="position:absolute;left:1879px;top:838px;width:1px;height:32px;background:#d8d8d8;"></div>
<div style="position:absolute;top:849.42px;font-size:12.5px;line-height:12.5px;color:#000;white-space:nowrap;transform:scaleX(0.9243);transform-origin:0 0;left:971.4px;">PFP04233</div>
<div style="position:absolute;top:849.42px;font-size:12.5px;line-height:12.5px;color:#000;white-space:nowrap;transform:scaleX(0.9650);transform-origin:0 0;left:1077.3px;">LP1Wafer02</div>
<div style="position:absolute;top:849.42px;font-size:12.5px;line-height:12.5px;color:#000;white-space:nowrap;transform:scaleX(0.8492);transform-origin:0 0;left:1164px;">Pass</div>
<div style="position:absolute;top:849.42px;font-size:12.5px;line-height:12.5px;color:#000;white-space:nowrap;transform:scaleX(1.0615);transform-origin:0 0;left:1251.5px;">(376/316)</div>
<div style="position:absolute;top:849.42px;font-size:12.5px;line-height:12.5px;color:#000;white-space:nowrap;transform:scaleX(0.9861);transform-origin:0 0;left:1348.1px;">Product\TQV2....</div>
<div style="position:absolute;top:848.50px;font-size:13px;line-height:13px;color:#000;white-space:nowrap;transform:scaleX(1.0353);transform-origin:0 0;left:1454.1px;">2025/11/15/16:28...</div>
<div style="position:absolute;top:841.33px;font-size:12.6px;line-height:12.6px;color:#000;white-space:nowrap;left:1580.5px;">X:4179.81</div>
<div style="position:absolute;top:855.33px;font-size:12.6px;line-height:12.6px;color:#000;white-space:nowrap;left:1581.4px;">Y:8262.86</div>
<div style="position:absolute;top:841.33px;font-size:12.6px;line-height:12.6px;color:#000;white-space:nowrap;left:1656.5px;">X:-5707.07</div>
<div style="position:absolute;top:855.33px;font-size:12.6px;line-height:12.6px;color:#000;white-space:nowrap;left:1657.8px;">Y:-5383.20</div>
<div style="position:absolute;top:841.33px;font-size:12.6px;line-height:12.6px;color:#000;white-space:nowrap;left:1732.5px;">X:437.83</div>
<div style="position:absolute;top:855.33px;font-size:12.6px;line-height:12.6px;color:#000;white-space:nowrap;left:1733.4px;">Y:2016.58</div>
<div style="position:absolute;top:841.33px;font-size:12.6px;line-height:12.6px;color:#000;white-space:nowrap;left:1808.5px;">X:6151.74</div>
<div style="position:absolute;top:855.33px;font-size:12.6px;line-height:12.6px;color:#000;white-space:nowrap;left:1809.4px;">Y:7329.70</div>
<div style="position:absolute;left:967px;top:871px;width:913px;height:32px;background:#f0f8ff;"></div>
<div style="position:absolute;left:967px;top:903px;width:913px;height:1px;background:#d8d8d8;"></div>
<div style="position:absolute;left:1072px;top:871px;width:1px;height:32px;background:#d8d8d8;"></div>
<div style="position:absolute;left:1159px;top:871px;width:1px;height:32px;background:#d8d8d8;"></div>
<div style="position:absolute;left:1246px;top:871px;width:1px;height:32px;background:#d8d8d8;"></div>
<div style="position:absolute;left:1343px;top:871px;width:1px;height:32px;background:#d8d8d8;"></div>
<div style="position:absolute;left:1450px;top:871px;width:1px;height:32px;background:#d8d8d8;"></div>
<div style="position:absolute;left:1575px;top:871px;width:1px;height:32px;background:#d8d8d8;"></div>
<div style="position:absolute;left:1651px;top:871px;width:1px;height:32px;background:#d8d8d8;"></div>
<div style="position:absolute;left:1727px;top:871px;width:1px;height:32px;background:#d8d8d8;"></div>
<div style="position:absolute;left:1803px;top:871px;width:1px;height:32px;background:#d8d8d8;"></div>
<div style="position:absolute;left:1879px;top:871px;width:1px;height:32px;background:#d8d8d8;"></div>
<div style="position:absolute;top:882.42px;font-size:12.5px;line-height:12.5px;color:#000;white-space:nowrap;transform:scaleX(0.9243);transform-origin:0 0;left:971.4px;">PFP04233</div>
<svg style="position:absolute;left:1076px;top:881px;" width="13" height="13" viewBox="0 0 13 13"><defs><radialGradient id="gfi7" cx="0.4" cy="0.35" r="0.7"><stop offset="0" stop-color="#f05050"/><stop offset="1" stop-color="#c01010"/></radialGradient></defs><circle cx="6.5" cy="6.5" r="6" fill="url(#gfi7)"/><path d="M4,4 L9,9 M9,4 L4,9" stroke="#fff" stroke-width="1.8" stroke-linecap="round"/></svg>
<div style="position:absolute;top:882.42px;font-size:12.5px;line-height:12.5px;color:#000;white-space:nowrap;transform:scaleX(0.9940);transform-origin:0 0;left:1093px;">LP1Wafe...</div>
<div style="position:absolute;top:882.42px;font-size:12.5px;line-height:12.5px;color:#000;white-space:nowrap;transform:scaleX(0.8812);transform-origin:0 0;left:1164px;">Failed</div>
<div style="position:absolute;top:882.42px;font-size:12.5px;line-height:12.5px;color:#000;white-space:nowrap;transform:scaleX(0.9250);transform-origin:0 0;left:1255.3px;">Failed Mark C...</div>
<div style="position:absolute;top:882.42px;font-size:12.5px;line-height:12.5px;color:#000;white-space:nowrap;transform:scaleX(0.9861);transform-origin:0 0;left:1348.1px;">Product\TQV2....</div>
<div style="position:absolute;top:881.50px;font-size:13px;line-height:13px;color:#000;white-space:nowrap;transform:scaleX(1.0353);transform-origin:0 0;left:1454.1px;">2025/11/15/15:14...</div>
<div style="position:absolute;top:874.33px;font-size:12.6px;line-height:12.6px;color:#000;white-space:nowrap;left:1580.5px;">X:5848.74</div>
<div style="position:absolute;top:888.33px;font-size:12.6px;line-height:12.6px;color:#000;white-space:nowrap;left:1581.4px;">Y:3819.90</div>
<div style="position:absolute;top:874.33px;font-size:12.6px;line-height:12.6px;color:#000;white-space:nowrap;left:1656.5px;">X:-1253.56</div>
<div style="position:absolute;top:888.33px;font-size:12.6px;line-height:12.6px;color:#000;white-space:nowrap;left:1657.8px;">Y:-1237.52</div>
<div style="position:absolute;top:874.33px;font-size:12.6px;line-height:12.6px;color:#000;white-space:nowrap;left:1732.5px;">X:943.89</div>
<div style="position:absolute;top:888.33px;font-size:12.6px;line-height:12.6px;color:#000;white-space:nowrap;left:1733.4px;">Y:1497.06</div>
<div style="position:absolute;top:874.33px;font-size:12.6px;line-height:12.6px;color:#000;white-space:nowrap;left:1808.5px;">X:3760.47</div>
<div style="position:absolute;top:888.33px;font-size:12.6px;line-height:12.6px;color:#000;white-space:nowrap;left:1809.4px;">Y:3262.79</div>
<div style="position:absolute;left:967px;top:904px;width:913px;height:32px;background:#ffffff;"></div>
<div style="position:absolute;left:967px;top:936px;width:913px;height:1px;background:#d8d8d8;"></div>
<div style="position:absolute;left:1072px;top:904px;width:1px;height:32px;background:#d8d8d8;"></div>
<div style="position:absolute;left:1159px;top:904px;width:1px;height:32px;background:#d8d8d8;"></div>
<div style="position:absolute;left:1246px;top:904px;width:1px;height:32px;background:#d8d8d8;"></div>
<div style="position:absolute;left:1343px;top:904px;width:1px;height:32px;background:#d8d8d8;"></div>
<div style="position:absolute;left:1450px;top:904px;width:1px;height:32px;background:#d8d8d8;"></div>
<div style="position:absolute;left:1575px;top:904px;width:1px;height:32px;background:#d8d8d8;"></div>
<div style="position:absolute;left:1651px;top:904px;width:1px;height:32px;background:#d8d8d8;"></div>
<div style="position:absolute;left:1727px;top:904px;width:1px;height:32px;background:#d8d8d8;"></div>
<div style="position:absolute;left:1803px;top:904px;width:1px;height:32px;background:#d8d8d8;"></div>
<div style="position:absolute;left:1879px;top:904px;width:1px;height:32px;background:#d8d8d8;"></div>
<div style="position:absolute;top:914.42px;font-size:12.5px;line-height:12.5px;color:#000;white-space:nowrap;transform:scaleX(0.9243);transform-origin:0 0;left:971.4px;">PFP04233</div>
<svg style="position:absolute;left:1076px;top:913px;" width="13" height="13" viewBox="0 0 13 13"><defs><radialGradient id="gfi8" cx="0.4" cy="0.35" r="0.7"><stop offset="0" stop-color="#f05050"/><stop offset="1" stop-color="#c01010"/></radialGradient></defs><circle cx="6.5" cy="6.5" r="6" fill="url(#gfi8)"/><path d="M4,4 L9,9 M9,4 L4,9" stroke="#fff" stroke-width="1.8" stroke-linecap="round"/></svg>
<div style="position:absolute;top:914.42px;font-size:12.5px;line-height:12.5px;color:#000;white-space:nowrap;transform:scaleX(0.9940);transform-origin:0 0;left:1093px;">LP1Wafe...</div>
<div style="position:absolute;top:914.42px;font-size:12.5px;line-height:12.5px;color:#000;white-space:nowrap;transform:scaleX(0.8812);transform-origin:0 0;left:1164px;">Failed</div>
<div style="position:absolute;top:914.42px;font-size:12.5px;line-height:12.5px;color:#000;white-space:nowrap;left:1255.3px;">Abort...</div>
<div style="position:absolute;top:914.42px;font-size:12.5px;line-height:12.5px;color:#000;white-space:nowrap;transform:scaleX(0.9861);transform-origin:0 0;left:1348.1px;">Product\TQV2....</div>
<div style="position:absolute;top:913.50px;font-size:13px;line-height:13px;color:#000;white-space:nowrap;transform:scaleX(1.0353);transform-origin:0 0;left:1454.1px;">2025/11/14/14:51...</div>
<div style="position:absolute;top:906.33px;font-size:12.6px;line-height:12.6px;color:#000;white-space:nowrap;left:1580.5px;">X:NaN</div>
<div style="position:absolute;top:920.33px;font-size:12.6px;line-height:12.6px;color:#000;white-space:nowrap;left:1581.4px;">Y:NaN</div>
<div style="position:absolute;top:906.33px;font-size:12.6px;line-height:12.6px;color:#000;white-space:nowrap;left:1656.5px;">X:NaN</div>
<div style="position:absolute;top:920.33px;font-size:12.6px;line-height:12.6px;color:#000;white-space:nowrap;left:1657.8px;">Y:NaN</div>
<div style="position:absolute;top:906.33px;font-size:12.6px;line-height:12.6px;color:#000;white-space:nowrap;left:1732.5px;">X:NaN</div>
<div style="position:absolute;top:920.33px;font-size:12.6px;line-height:12.6px;color:#000;white-space:nowrap;left:1733.4px;">Y:NaN</div>
<div style="position:absolute;top:906.33px;font-size:12.6px;line-height:12.6px;color:#000;white-space:nowrap;left:1808.5px;">X:NaN</div>
<div style="position:absolute;top:920.33px;font-size:12.6px;line-height:12.6px;color:#000;white-space:nowrap;left:1809.4px;">Y:NaN</div>
</div>
<div style="position:absolute;left:1880px;top:640px;width:17px;height:277px;background:linear-gradient(to right,#e6e6e6,#f2f2f2 40%,#f0f0f0);"></div>
<svg style="position:absolute;left:1884px;top:645px;" width="9" height="6" viewBox="0 0 9 6"><polygon points="0.5,5 4.5,0.5 8.5,5" fill="#3a3a3a"/></svg>
<div style="position:absolute;left:1881px;top:657px;width:15px;height:97px;box-sizing:border-box;border:1px solid #8f8f8f;border-radius:2px;background:linear-gradient(to right,#f4f4f4,#e2e2e2 70%,#cfcfcf);"></div>
<svg style="position:absolute;left:1884px;top:700px;" width="9" height="9" viewBox="0 0 9 9"><path d="M1,1.5 H8 M1,4.5 H8 M1,7.5 H8" stroke="#3c3c3c" stroke-width="1.2"/></svg>
<svg style="position:absolute;left:1884px;top:906px;" width="9" height="6" viewBox="0 0 9 6"><polygon points="0.5,0.5 8.5,0.5 4.5,5" fill="#3a3a3a"/></svg>
</body></html>
